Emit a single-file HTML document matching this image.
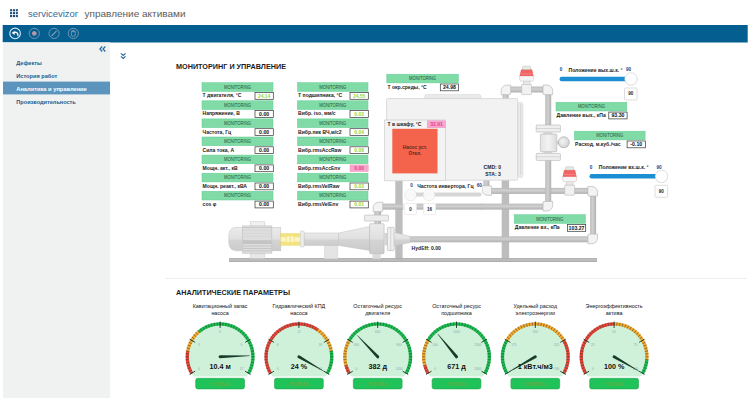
<!DOCTYPE html>
<html lang="ru"><head><meta charset="utf-8"><title>servicevizor</title>
<style>
html,body{margin:0;padding:0;background:#fff;}
body{width:750px;height:405px;overflow:hidden;font-family:'Liberation Sans',sans-serif;}
svg{display:block;}
text{font-family:'Liberation Sans',sans-serif;}
.lbl{font-size:5.05px;font-weight:bold;fill:#222;}
.mon{font-size:4.5px;fill:#1f5236;text-anchor:middle;}
.val{font-size:5.2px;font-weight:bold;text-anchor:middle;fill:#111;}
.valg{font-size:5px;font-weight:bold;text-anchor:middle;fill:#93d843;}
.valp{font-size:5px;font-weight:bold;text-anchor:middle;fill:#e2457e;}
.menu{font-size:6.1px;font-weight:bold;fill:#1d5b8c;}
.gt{font-size:5.4px;fill:#111;text-anchor:middle;}
.gv{font-size:7.2px;font-weight:bold;fill:#111;text-anchor:middle;}
.gl{font-size:3.2px;fill:#8aa;text-anchor:middle;}
.nm{font-size:5.3px;fill:#7fa535;text-anchor:middle;}
.sl{font-size:5.05px;font-weight:bold;fill:#222;}
.sn{font-size:4.6px;font-weight:bold;fill:#173f8a;text-anchor:middle;}
.sb{font-size:4.5px;font-weight:bold;fill:#222;text-anchor:middle;}
</style></head><body>
<svg width="750" height="405" viewBox="0 0 750 405">
<defs>
<linearGradient id="pv" x1="0" y1="0" x2="0" y2="1"><stop offset="0" stop-color="#bcbcbc"/><stop offset="0.45" stop-color="#d0d0d0"/><stop offset="1" stop-color="#b0b0b0"/></linearGradient>
<linearGradient id="ph" x1="0" y1="0" x2="1" y2="0"><stop offset="0" stop-color="#bcbcbc"/><stop offset="0.45" stop-color="#d0d0d0"/><stop offset="1" stop-color="#b0b0b0"/></linearGradient>
<linearGradient id="body" x1="0" y1="0" x2="0" y2="1"><stop offset="0" stop-color="#ebebeb"/><stop offset="0.5" stop-color="#e0e0e0"/><stop offset="0.55" stop-color="#d4d4d4"/><stop offset="1" stop-color="#cbcbcb"/></linearGradient>
<linearGradient id="bodyh" x1="0" y1="0" x2="1" y2="0"><stop offset="0" stop-color="#e4e4e4"/><stop offset="0.5" stop-color="#f2f2f2"/><stop offset="1" stop-color="#dcdcdc"/></linearGradient>
<radialGradient id="ball" cx="0.4" cy="0.4" r="0.7"><stop offset="0" stop-color="#f4f4f4"/><stop offset="1" stop-color="#cfcfcf"/></radialGradient>
</defs>

<rect x="0" y="0" width="750" height="405" fill="#fff"/>
<rect x="10.0" y="9.2" width="2.1" height="2.1" fill="#1f4e79"/>
<rect x="12.9" y="9.2" width="2.1" height="2.1" fill="#1f4e79"/>
<rect x="15.8" y="9.2" width="2.1" height="2.1" fill="#1f4e79"/>
<rect x="10.0" y="12.1" width="2.1" height="2.1" fill="#1f4e79"/>
<rect x="12.9" y="12.1" width="2.1" height="2.1" fill="#1f4e79"/>
<rect x="15.8" y="12.1" width="2.1" height="2.1" fill="#1f4e79"/>
<rect x="10.0" y="15.0" width="2.1" height="2.1" fill="#1f4e79"/>
<rect x="12.9" y="15.0" width="2.1" height="2.1" fill="#1f4e79"/>
<rect x="15.8" y="15.0" width="2.1" height="2.1" fill="#1f4e79"/>
<text x="28" y="17" font-size="9.4" fill="#356a94" textLength="50" lengthAdjust="spacingAndGlyphs">servicevizor</text>
<text x="84.5" y="17" font-size="9.8" fill="#5c5c5c" textLength="101" lengthAdjust="spacingAndGlyphs">управление активами</text>
<rect x="2.7" y="25" width="745" height="17.5" fill="#045f90"/>
<g fill="none" stroke="#fff" stroke-width="0.9">
<circle cx="15.1" cy="33.4" r="5.3" stroke-width="1.1" stroke="#d8ebf7"/>
<path d="M13 32.8 C14.6 31.8 17 32 17.7 33.8 C18 34.6 17.9 35.2 17.6 35.8" stroke-width="1.4"/>
<path d="M11.7 33 L14.6 30.9 L14.6 35 Z" fill="#fff" stroke="none"/>
</g>
<g fill="none" stroke="#7f9bb3" stroke-width="0.9">
<circle cx="34.3" cy="33.4" r="5.1"/><circle cx="34.3" cy="33.4" r="1.9" fill="#b89aa4" stroke="#b89aa4"/>
<circle cx="54.1" cy="33.4" r="5.1"/><path d="M51.6 36 L56.6 30.9" stroke-width="1.3"/>
<circle cx="73.3" cy="33.4" r="5.1"/><rect x="71.4" y="31.7" width="3.8" height="4.4" rx="0.5"/><path d="M70.8 31.2 H75.8 M72.4 30.4 H74.2"/>
</g>
<rect x="3" y="42.3" width="107" height="355.7" fill="#f0f1f1"/>
<path d="M102.2 46.5 L99.9 49 L102.2 51.5 M105.3 46.5 L103 49 L105.3 51.5" fill="none" stroke="#2a6aa0" stroke-width="1.2"/>
<path d="M120.9 53.4 L123.2 55.4 L125.5 53.4 M120.9 56.4 L123.2 58.4 L125.5 56.4" fill="none" stroke="#2a6aa0" stroke-width="1.2"/>
<text x="16.3" y="64.9" class="menu" textLength="25.5" lengthAdjust="spacingAndGlyphs">Дефекты</text>
<text x="16.3" y="77.8" class="menu" textLength="41" lengthAdjust="spacingAndGlyphs">История работ</text>
<rect x="3" y="81.6" width="107" height="12.8" fill="#5b94bd"/>
<text x="16.3" y="90.8" class="menu" style="fill:#fff" textLength="70.5" lengthAdjust="spacingAndGlyphs">Аналитика и управление</text>
<text x="16.3" y="103.9" class="menu" textLength="59.5" lengthAdjust="spacingAndGlyphs">Производительность</text>
<text x="176" y="69" font-size="7.5" font-weight="bold" fill="#1c1c1c" textLength="110" lengthAdjust="spacingAndGlyphs">МОНИТОРИНГ И УПРАВЛЕНИЕ</text>
<rect x="165" y="278" width="582" height="0.8" fill="#ececec"/>
<text x="176" y="295.4" font-size="7.5" font-weight="bold" fill="#1c1c1c" textLength="114" lengthAdjust="spacingAndGlyphs">АНАЛИТИЧЕСКИЕ ПАРАМЕТРЫ</text>
<rect x="395.3" y="180" width="7.3" height="79" fill="#bdbdbd"/>
<rect x="501.7" y="180" width="7.4" height="79" fill="#bdbdbd"/>
<rect x="229" y="258.3" width="368" height="3.6" fill="#bcbcbc"/><rect x="229" y="258.3" width="368" height="0.6" fill="#a2a2a2"/><rect x="229" y="261.3" width="368" height="0.6" fill="#a2a2a2"/>
<rect x="483.4" y="180" width="6" height="6.400000000000006" fill="url(#ph)"/>
<rect x="490.9" y="187.9" width="97.70000000000005" height="6" fill="url(#pv)"/>
<rect x="590.1" y="195.4" width="6" height="39.400000000000006" fill="url(#ph)"/>
<rect x="409" y="236.3" width="179.60000000000002" height="6" fill="url(#pv)"/>
<path d="M482.00 185.70 L482.00 189.80 A5.5 5.5 0 0 0 487.50 195.30 L491.60 195.30 L491.60 186.50 L490.80 186.50 L490.80 185.70 Z" fill="#f3f3f3" stroke="#b0b0b0" stroke-width="0.6" stroke-linejoin="round"/>
<path d="M597.50 196.10 L597.50 192.00 A5.5 5.5 0 0 0 592.00 186.50 L587.90 186.50 L587.90 195.30 L588.70 195.30 L588.70 196.10 Z" fill="#f3f3f3" stroke="#b0b0b0" stroke-width="0.6" stroke-linejoin="round"/>
<path d="M597.50 234.10 L597.50 238.20 A5.5 5.5 0 0 1 592.00 243.70 L587.90 243.70 L587.90 234.90 L588.70 234.90 L588.70 234.10 Z" fill="#f3f3f3" stroke="#b0b0b0" stroke-width="0.6" stroke-linejoin="round"/>
<rect x="374.6" y="211.1" width="6" height="4.900000000000006" fill="url(#ph)"/>
<rect x="382.1" y="203.6" width="161.60000000000002" height="6" fill="url(#pv)"/>
<rect x="545.2" y="94.0" width="6" height="108.1" fill="url(#ph)"/>
<rect x="510.0" y="86.5" width="33.700000000000045" height="6" fill="url(#pv)"/>
<rect x="502.5" y="94.0" width="6" height="5.0" fill="url(#ph)"/>
<path d="M373.20 211.80 L373.20 207.70 A5.5 5.5 0 0 1 378.70 202.20 L382.80 202.20 L382.80 211.00 L382.00 211.00 L382.00 211.80 Z" fill="#f3f3f3" stroke="#b0b0b0" stroke-width="0.6" stroke-linejoin="round"/>
<path d="M552.60 201.40 L552.60 205.50 A5.5 5.5 0 0 1 547.10 211.00 L543.00 211.00 L543.00 202.20 L543.80 202.20 L543.80 201.40 Z" fill="#f3f3f3" stroke="#b0b0b0" stroke-width="0.6" stroke-linejoin="round"/>
<path d="M552.60 94.70 L552.60 90.60 A5.5 5.5 0 0 0 547.10 85.10 L543.00 85.10 L543.00 93.90 L543.80 93.90 L543.80 94.70 Z" fill="#f3f3f3" stroke="#b0b0b0" stroke-width="0.6" stroke-linejoin="round"/>
<path d="M501.10 94.70 L501.10 90.60 A5.5 5.5 0 0 1 506.60 85.10 L510.70 85.10 L510.70 93.90 L509.90 93.90 L509.90 94.70 Z" fill="#f3f3f3" stroke="#b0b0b0" stroke-width="0.6" stroke-linejoin="round"/>
<rect x="521.7" y="84.4" width="9.8" height="10.2" rx="0.8" fill="#f1f1f1" stroke="#b8b8b8" stroke-width="0.6"/>
<rect x="523.2" y="80.9" width="6.8" height="3.5" fill="#e9e9e9" stroke="#c0c0c0" stroke-width="0.5"/>
<path d="M519.6 76.0 H533.6 V79.5 Q533.6 81.1 532.0 81.1 H521.2 Q519.6 81.1 519.6 79.5 Z" fill="#f6f6f6" stroke="#cdbcbc" stroke-width="0.5"/>
<path d="M519.6 76.1 L520.8000000000001 70.5 Q521.0 69.2 522.4 69.2 H530.8000000000001 Q532.2 69.2 532.4 70.5 L533.6 76.1 Z" fill="#f06464"/>
<rect x="520.4" y="73.3" width="12.4" height="1.2" fill="#f58a8a" opacity="0.7"/>
<rect x="522.6" y="66.2" width="8" height="3.2" rx="0.8" fill="#e6ebe6" stroke="#b8b8b8" stroke-width="0.5"/>
<rect x="564.7" y="185.0" width="9.8" height="10.2" rx="0.8" fill="#f1f1f1" stroke="#b8b8b8" stroke-width="0.6"/>
<rect x="566.2" y="181.5" width="6.8" height="3.5" fill="#e9e9e9" stroke="#c0c0c0" stroke-width="0.5"/>
<path d="M562.6 176.6 H576.6 V180.1 Q576.6 181.7 575.0 181.7 H564.2 Q562.6 181.7 562.6 180.1 Z" fill="#f6f6f6" stroke="#cdbcbc" stroke-width="0.5"/>
<path d="M562.6 176.7 L563.8000000000001 171.1 Q564.0 169.79999999999998 565.4 169.79999999999998 H573.8000000000001 Q575.2 169.79999999999998 575.4 171.1 L576.6 176.7 Z" fill="#f06464"/>
<rect x="563.4" y="173.9" width="12.4" height="1.2" fill="#f58a8a" opacity="0.7"/>
<rect x="565.6" y="166.79999999999998" width="8" height="3.2" rx="0.8" fill="#e6ebe6" stroke="#b8b8b8" stroke-width="0.5"/>
<rect x="536.2" y="125" width="24.2" height="7" rx="0.8" fill="#efefef" stroke="#b4b4b4" stroke-width="0.6"/>
<rect x="536.2" y="128.2" width="24.2" height="0.6" fill="#c4c4c4"/>
<rect x="536.2" y="153.4" width="24.2" height="7" rx="0.8" fill="#efefef" stroke="#b4b4b4" stroke-width="0.6"/>
<rect x="536.2" y="156.6" width="24.2" height="0.6" fill="#c4c4c4"/>
<rect x="543.4" y="132" width="9" height="2.6" fill="#d6d6d6"/>
<rect x="543.4" y="151.8" width="9" height="1.8" fill="#d6d6d6"/>
<rect x="540.4" y="134.1" width="16.4" height="17.6" rx="0.8" fill="url(#bodyh)" stroke="#b4b4b4" stroke-width="0.6"/>
<rect x="556.6" y="141" width="2.4" height="3.4" fill="#d0d0d0"/>
<circle cx="563.8" cy="142.3" r="5.5" fill="url(#ball)" stroke="#a8a8a8" stroke-width="0.7"/>
<path d="M424.5 98.8 V96.4 Q424.5 94.4 427 94.4 H478.5 Q481 94.4 481 96.4 V98.8 Z" fill="#e9e9e9" stroke="#d2d2d2" stroke-width="0.5"/>
<rect x="386.6" y="98.6" width="131" height="81.6" rx="1" fill="#f2f2f2" stroke="#d0d0d0" stroke-width="0.7"/>
<rect x="518.2" y="102.3" width="4.6" height="75.3" rx="2" fill="#ececec" stroke="#cdcdcd" stroke-width="0.5"/>
<rect x="520.2" y="104" width="1" height="71" fill="#d5d5d5"/>
<rect x="384.4" y="120" width="61" height="60.8" fill="#f3f3f3" stroke="#cfcfcf" stroke-width="0.7"/>
<rect x="392.3" y="128.8" width="45.2" height="44.6" fill="#f4634c"/>
<text x="414.9" y="149.4" font-size="4.8" fill="#5a2a20" text-anchor="middle" font-weight="bold">Насос уст.</text>
<text x="414.9" y="155.4" font-size="4.8" fill="#5a2a20" text-anchor="middle" font-weight="bold">Откл.</text>
<text x="387.6" y="126" class="lbl">Т в шкафу, °C</text>
<rect x="427.3" y="120.8" width="17.9" height="7" fill="#f9a6d2" stroke="#e58fbf" stroke-width="0.4"/>
<text x="436.5" y="126" class="valp">32.91</text>
<text x="483.6" y="169" class="lbl">CMD: 0</text>
<text x="485.2" y="176.2" class="lbl">STA: 3</text>
<rect x="250.3" y="221.8" width="14.5" height="4.4" fill="#f0f0f0" stroke="#c6c6c6" stroke-width="0.5"/>
<rect x="250.3" y="253.3" width="14.4" height="5" fill="#e8e8e8" stroke="#cccccc" stroke-width="0.5"/>
<path d="M242.5 227.3 H237 Q228.8 227.3 228.8 236 V242 Q228.8 250.8 237 250.8 H242.5 Z" fill="url(#body)" stroke="#c2c2c2" stroke-width="0.5"/>
<rect x="242.3" y="225.9" width="29.6" height="27.4" fill="#dddddd" stroke="#bdbdbd" stroke-width="0.5"/>
<rect x="242.6" y="227.2" width="29" height="0.8" fill="#c6c6c6"/>
<rect x="242.6" y="230.5" width="29" height="0.5" fill="#d0d0d0"/>
<rect x="242.6" y="233.5" width="29" height="0.5" fill="#d0d0d0"/>
<rect x="242.6" y="236.5" width="29" height="0.5" fill="#d0d0d0"/>
<rect x="242.6" y="240.2" width="29" height="3.8" fill="#c4c4c4"/>
<rect x="242.6" y="245.6" width="29" height="1" fill="#c6c6c6"/>
<rect x="242.6" y="248" width="29" height="1" fill="#c6c6c6"/>
<rect x="242.6" y="250.4" width="29" height="1" fill="#c6c6c6"/>
<rect x="271.9" y="227.3" width="8.9" height="23.5" fill="url(#body)" stroke="#c2c2c2" stroke-width="0.5"/>
<rect x="280.8" y="233.5" width="19.8" height="11.7" fill="#f3e37c" stroke="#e3d263" stroke-width="0.4"/>
<rect x="280.8" y="237.2" width="19.8" height="4.3" fill="#fbf6c8"/>
<rect x="286.5" y="235.7" width="3.7" height="7.1" rx="1" fill="#fbf6c8" stroke="#e3d263" stroke-width="0.4"/>
<rect x="290.4" y="235.7" width="3.7" height="7.1" rx="1" fill="#fbf6c8" stroke="#e3d263" stroke-width="0.4"/>
<rect x="324.3" y="245" width="13.6" height="13.8" fill="#e4e4e4" stroke="#d0d0d0" stroke-width="0.4"/>
<rect x="300.4" y="231" width="3.8" height="16" rx="0.8" fill="#ececec" stroke="#c8c8c8" stroke-width="0.5"/>
<rect x="304.2" y="233" width="34.5" height="12.4" fill="url(#body)" stroke="#c0c0c0" stroke-width="0.5"/>
<path d="M338.5 233 L369.8 226.5 V250.5 L338.5 245.4 Z" fill="url(#body)" stroke="#c0c0c0" stroke-width="0.5"/>
<rect x="372.4" y="253.5" width="8.4" height="5.3" fill="#dcdcdc"/>
<rect x="374.4" y="211.5" width="6.6" height="12.6" fill="url(#ph)"/>
<rect x="364.3" y="215.1" width="24.2" height="6" rx="0.8" fill="#ededed" stroke="#b8b8b8" stroke-width="0.6"/>
<rect x="369.6" y="223.7" width="14.5" height="30" rx="1" fill="url(#body)" stroke="#b8b8b8" stroke-width="0.6"/>
<rect x="384" y="233" width="3.6" height="12.4" fill="#d6d6d6"/>
<rect x="387.4" y="227.4" width="6.8" height="23.2" rx="0.8" fill="#efefef" stroke="#b4b4b4" stroke-width="0.6"/>
<rect x="390.5" y="227.4" width="0.6" height="23.2" fill="#c4c4c4"/>
<path d="M394.2 232.4 L410.2 236.3 V242.5 L394.2 245.8 Z" fill="url(#body)" stroke="#c0c0c0" stroke-width="0.5"/>
<text x="411.6" y="249.6" class="lbl">HydEff:  0.00</text>
<rect x="202" y="82.7" width="71" height="8.7" fill="#80dba6" stroke="#5fcc93" stroke-width="0.5"/>
<text x="237.5" y="88.60000000000001" class="mon" textLength="27" lengthAdjust="spacingAndGlyphs">MONITORING</text>
<text x="202.6" y="97.3" class="lbl">Т двигателя, °C</text>
<rect x="255.0" y="92.5" width="18.3" height="6.8" fill="#fff" stroke="#333" stroke-width="0.7"/>
<text x="264.15" y="97.8" class="valg">24.14</text>
<rect x="202" y="100.80000000000001" width="71" height="8.7" fill="#80dba6" stroke="#5fcc93" stroke-width="0.5"/>
<text x="237.5" y="106.70000000000002" class="mon" textLength="27" lengthAdjust="spacingAndGlyphs">MONITORING</text>
<text x="202.6" y="115.4" class="lbl">Напряжение, В</text>
<rect x="255.0" y="110.60000000000001" width="18.3" height="6.8" fill="#fff" stroke="#333" stroke-width="0.7"/>
<text x="264.15" y="115.9" class="val">0.00</text>
<rect x="202" y="118.9" width="71" height="8.7" fill="#80dba6" stroke="#5fcc93" stroke-width="0.5"/>
<text x="237.5" y="124.80000000000001" class="mon" textLength="27" lengthAdjust="spacingAndGlyphs">MONITORING</text>
<text x="202.6" y="133.5" class="lbl">Частота, Гц</text>
<rect x="255.0" y="128.70000000000002" width="18.3" height="6.8" fill="#fff" stroke="#333" stroke-width="0.7"/>
<text x="264.15" y="134.00000000000003" class="val">0.00</text>
<rect x="202" y="137.0" width="71" height="8.7" fill="#80dba6" stroke="#5fcc93" stroke-width="0.5"/>
<text x="237.5" y="142.9" class="mon" textLength="27" lengthAdjust="spacingAndGlyphs">MONITORING</text>
<text x="202.6" y="151.6" class="lbl">Сила тока, А</text>
<rect x="255.0" y="146.8" width="18.3" height="6.8" fill="#fff" stroke="#333" stroke-width="0.7"/>
<text x="264.15" y="152.10000000000002" class="val">0.00</text>
<rect x="202" y="155.10000000000002" width="71" height="8.7" fill="#80dba6" stroke="#5fcc93" stroke-width="0.5"/>
<text x="237.5" y="161.00000000000003" class="mon" textLength="27" lengthAdjust="spacingAndGlyphs">MONITORING</text>
<text x="202.6" y="169.70000000000002" class="lbl">Мощн. акт., кВ</text>
<rect x="255.0" y="164.90000000000003" width="18.3" height="6.8" fill="#fff" stroke="#333" stroke-width="0.7"/>
<text x="264.15" y="170.20000000000005" class="val">0.00</text>
<rect x="202" y="173.2" width="71" height="8.7" fill="#80dba6" stroke="#5fcc93" stroke-width="0.5"/>
<text x="237.5" y="179.1" class="mon" textLength="27" lengthAdjust="spacingAndGlyphs">MONITORING</text>
<text x="202.6" y="187.79999999999998" class="lbl">Мощн. реакт., кВА</text>
<rect x="255.0" y="183.0" width="18.3" height="6.8" fill="#fff" stroke="#333" stroke-width="0.7"/>
<text x="264.15" y="188.3" class="val">0.00</text>
<rect x="202" y="191.3" width="71" height="8.7" fill="#80dba6" stroke="#5fcc93" stroke-width="0.5"/>
<text x="237.5" y="197.20000000000002" class="mon" textLength="27" lengthAdjust="spacingAndGlyphs">MONITORING</text>
<text x="202.6" y="205.9" class="lbl">cos φ</text>
<rect x="255.0" y="201.10000000000002" width="18.3" height="6.8" fill="#fff" stroke="#333" stroke-width="0.7"/>
<text x="264.15" y="206.40000000000003" class="val">0.00</text>
<rect x="297.5" y="82.7" width="70.5" height="8.7" fill="#80dba6" stroke="#5fcc93" stroke-width="0.5"/>
<text x="332.75" y="88.60000000000001" class="mon" textLength="27" lengthAdjust="spacingAndGlyphs">MONITORING</text>
<text x="298.1" y="97.3" class="lbl">Т подшипника, °C</text>
<rect x="350.0" y="92.5" width="18.3" height="6.8" fill="#fff" stroke="#333" stroke-width="0.7"/>
<text x="359.15" y="97.8" class="valg">24.55</text>
<rect x="297.5" y="100.80000000000001" width="70.5" height="8.7" fill="#80dba6" stroke="#5fcc93" stroke-width="0.5"/>
<text x="332.75" y="106.70000000000002" class="mon" textLength="27" lengthAdjust="spacingAndGlyphs">MONITORING</text>
<text x="298.1" y="115.4" class="lbl">Вибр. iso, мм/с</text>
<rect x="350.0" y="110.60000000000001" width="18.3" height="6.8" fill="#fff" stroke="#333" stroke-width="0.7"/>
<text x="359.15" y="115.9" class="valg">0.03</text>
<rect x="297.5" y="118.9" width="70.5" height="8.7" fill="#80dba6" stroke="#5fcc93" stroke-width="0.5"/>
<text x="332.75" y="124.80000000000001" class="mon" textLength="27" lengthAdjust="spacingAndGlyphs">MONITORING</text>
<text x="298.1" y="133.5" class="lbl">Вибр.пик ВЧ,м/с2</text>
<rect x="350.0" y="128.70000000000002" width="18.3" height="6.8" fill="#fff" stroke="#333" stroke-width="0.7"/>
<text x="359.15" y="134.00000000000003" class="valg">0.04</text>
<rect x="297.5" y="137.0" width="70.5" height="8.7" fill="#80dba6" stroke="#5fcc93" stroke-width="0.5"/>
<text x="332.75" y="142.9" class="mon" textLength="27" lengthAdjust="spacingAndGlyphs">MONITORING</text>
<text x="298.1" y="151.6" class="lbl">Вибр.rmsAccRaw</text>
<rect x="350.0" y="146.8" width="18.3" height="6.8" fill="#fff" stroke="#333" stroke-width="0.7"/>
<text x="359.15" y="152.10000000000002" class="valg">0.08</text>
<rect x="297.5" y="155.10000000000002" width="70.5" height="8.7" fill="#80dba6" stroke="#5fcc93" stroke-width="0.5"/>
<text x="332.75" y="161.00000000000003" class="mon" textLength="27" lengthAdjust="spacingAndGlyphs">MONITORING</text>
<text x="298.1" y="169.70000000000002" class="lbl">Вибр.rmsAccEnv</text>
<rect x="350.0" y="164.90000000000003" width="18.3" height="6.8" fill="#f7a8d0" stroke="#e9a" stroke-width="0.4"/>
<text x="359.15" y="170.10000000000002" class="valp">0.00</text>
<rect x="297.5" y="173.2" width="70.5" height="8.7" fill="#80dba6" stroke="#5fcc93" stroke-width="0.5"/>
<text x="332.75" y="179.1" class="mon" textLength="27" lengthAdjust="spacingAndGlyphs">MONITORING</text>
<text x="298.1" y="187.79999999999998" class="lbl">Вибр.rmsVelRaw</text>
<rect x="350.0" y="183.0" width="18.3" height="6.8" fill="#fff" stroke="#333" stroke-width="0.7"/>
<text x="359.15" y="188.3" class="valg">0.03</text>
<rect x="297.5" y="191.3" width="70.5" height="8.7" fill="#80dba6" stroke="#5fcc93" stroke-width="0.5"/>
<text x="332.75" y="197.20000000000002" class="mon" textLength="27" lengthAdjust="spacingAndGlyphs">MONITORING</text>
<text x="298.1" y="205.9" class="lbl">Вибр.rmsVelEnv</text>
<rect x="350.0" y="201.10000000000002" width="18.3" height="6.8" fill="#fff" stroke="#333" stroke-width="0.7"/>
<text x="359.15" y="206.40000000000003" class="valg">0.01</text>
<rect x="386.8" y="74.2" width="71.5" height="8.7" fill="#80dba6" stroke="#5fcc93" stroke-width="0.5"/>
<text x="422.55" y="80.10000000000001" class="mon" textLength="27" lengthAdjust="spacingAndGlyphs">MONITORING</text>
<text x="387.40000000000003" y="88.8" class="lbl">Т окр.среды, °C</text>
<rect x="440.3" y="84.0" width="18.3" height="6.8" fill="#fff" stroke="#333" stroke-width="0.7"/>
<text x="449.45" y="89.3" class="val">24.98</text>
<rect x="556" y="102.3" width="70.8" height="8.7" fill="#80dba6" stroke="#5fcc93" stroke-width="0.5"/>
<text x="591.4" y="108.2" class="mon" textLength="27" lengthAdjust="spacingAndGlyphs">MONITORING</text>
<text x="556.6" y="116.89999999999999" class="lbl">Давление вых., кПа</text>
<rect x="608.8" y="112.1" width="18.3" height="6.8" fill="#fff" stroke="#333" stroke-width="0.7"/>
<text x="617.9499999999999" y="117.39999999999999" class="val">93.30</text>
<rect x="574.5" y="131.2" width="70.6" height="8.7" fill="#80dba6" stroke="#5fcc93" stroke-width="0.5"/>
<text x="609.8" y="137.1" class="mon" textLength="27" lengthAdjust="spacingAndGlyphs">MONITORING</text>
<text x="575.1" y="145.79999999999998" class="lbl">Расход, м.куб./час</text>
<rect x="627.1" y="141.0" width="18.3" height="6.8" fill="#fff" stroke="#333" stroke-width="0.7"/>
<text x="636.25" y="146.3" class="val">-0.10</text>
<rect x="514.2" y="214.7" width="71.2" height="8.7" fill="#80dba6" stroke="#5fcc93" stroke-width="0.5"/>
<text x="549.8000000000001" y="220.6" class="mon" textLength="27" lengthAdjust="spacingAndGlyphs">MONITORING</text>
<text x="514.8000000000001" y="229.29999999999998" class="lbl">Давление вх., кПа</text>
<rect x="567.4000000000001" y="224.5" width="18.3" height="6.8" fill="#fff" stroke="#333" stroke-width="0.7"/>
<text x="576.5500000000001" y="229.8" class="val">103.27</text>
<text x="561.0" y="71.4" class="sn">0</text>
<text x="568.5" y="71.8" class="sl">Положение вых.ш.к. °</text>
<text x="628.5" y="71.4" class="sn">90</text>
<rect x="559.5" y="76.8" width="71.0" height="4.4" rx="2.2" fill="#1b8fd2"/>
<circle cx="631.0" cy="79.4" r="6.6" fill="#000" opacity="0.08"/>
<circle cx="631.0" cy="79" r="6.2" fill="#fff" stroke="#d6d6d6" stroke-width="0.7"/>
<rect x="624.5" y="88" width="12.6" height="12" rx="1" fill="#fff" stroke="#cfcfcf" stroke-width="0.7"/>
<text x="630.8" y="95.4" class="sb">90</text>
<text x="591.0" y="168.70000000000002" class="sn">0</text>
<text x="598.8" y="169.10000000000002" class="sl">Положение вх.ш.к. °</text>
<text x="659" y="168.70000000000002" class="sn">90</text>
<rect x="589.5" y="174.10000000000002" width="71.5" height="4.4" rx="2.2" fill="#1b8fd2"/>
<circle cx="661.5" cy="176.70000000000002" r="6.6" fill="#000" opacity="0.08"/>
<circle cx="661.5" cy="176.3" r="6.2" fill="#fff" stroke="#d6d6d6" stroke-width="0.7"/>
<rect x="655" y="185.3" width="12.6" height="12" rx="1" fill="#fff" stroke="#cfcfcf" stroke-width="0.7"/>
<text x="661.3" y="192.70000000000002" class="sb">90</text>
<rect x="403.2" y="181.5" width="78.6" height="33.5" fill="#fff" opacity="0.92"/>
<text x="411.6" y="186.6" class="sn">0</text>
<text x="417.2" y="187.8" class="sl">Частота инвертора, Гц</text>
<text x="479.3" y="186.6" class="sn">60</text>
<rect x="405" y="192.5" width="76.6" height="4" rx="2" fill="#d6d6d6"/>
<rect x="435.6" y="203.6" width="47.39999999999998" height="6" fill="url(#pv)"/>
<rect x="416.4" y="203.6" width="7.2000000000000455" height="6" fill="url(#pv)"/>
<circle cx="410.5" cy="195.2" r="6.2" fill="#000" opacity="0.06"/>
<circle cx="410.5" cy="194.8" r="5.8" fill="#fbfbfb" stroke="#e6e6e6" stroke-width="0.5" opacity="0.95"/>
<circle cx="429" cy="195.2" r="6.2" fill="#000" opacity="0.06"/>
<circle cx="429" cy="194.8" r="5.8" fill="#fbfbfb" stroke="#e6e6e6" stroke-width="0.5" opacity="0.95"/>
<rect x="404.6" y="203.6" width="11.8" height="11" rx="0.8" fill="#fff" stroke="#e0e0e0" stroke-width="0.6"/>
<text x="410.5" y="210.6" class="sb">0</text>
<rect x="423.7" y="203.6" width="11.8" height="11" rx="0.8" fill="#fff" stroke="#e0e0e0" stroke-width="0.6"/>
<text x="429.59999999999997" y="210.6" class="sb">16</text>
<text x="220.1" y="308.2" class="gt">Кавитационный запас</text>
<text x="220.1" y="314.9" class="gt">насоса</text>
<clipPath id="gc0"><rect x="180.1" y="316.8" width="80" height="59.80000000000001"/></clipPath>
<circle cx="220.1" cy="356.8" r="33" fill="#cff1da" clip-path="url(#gc0)"/>
<path d="M190.27 374.13 L188.79 371.30 L191.79 369.91 L193.12 372.47 Z" fill="#ea4433"/>
<path d="M188.87 371.46 L187.65 368.51 L190.75 367.39 L191.86 370.06 Z" fill="#ea4433"/>
<path d="M187.71 368.68 L186.75 365.64 L189.94 364.80 L190.81 367.55 Z" fill="#ea4433"/>
<path d="M186.80 365.82 L186.11 362.70 L189.36 362.14 L189.98 364.95 Z" fill="#ea4433"/>
<path d="M186.14 362.88 L185.72 359.72 L189.01 359.44 L189.39 362.30 Z" fill="#ea4433"/>
<path d="M185.74 359.90 L185.60 356.71 L188.90 356.72 L189.03 359.60 Z" fill="#ea4433"/>
<path d="M185.60 356.89 L185.74 353.70 L189.03 354.00 L188.90 356.88 Z" fill="#ea4433"/>
<path d="M185.72 353.88 L186.14 350.72 L189.39 351.30 L189.01 354.16 Z" fill="#ea4433"/>
<path d="M186.11 350.90 L186.80 347.78 L189.98 348.65 L189.36 351.46 Z" fill="#f5a927"/>
<path d="M186.75 347.96 L187.71 344.92 L190.81 346.05 L189.94 348.80 Z" fill="#f5a927"/>
<path d="M187.65 345.09 L188.87 342.14 L191.86 343.54 L190.75 346.21 Z" fill="#f5a927"/>
<path d="M188.79 342.30 L190.27 339.47 L193.12 341.13 L191.79 343.69 Z" fill="#f5a927"/>
<path d="M190.18 339.63 L191.89 336.94 L194.59 338.84 L193.04 341.27 Z" fill="#f5a927"/>
<path d="M191.79 337.09 L193.73 334.55 L196.25 336.68 L194.50 338.97 Z" fill="#f5a927"/>
<path d="M193.61 334.69 L195.77 332.34 L198.10 334.68 L196.15 336.81 Z" fill="#f5a927"/>
<path d="M195.64 332.47 L197.99 330.31 L200.11 332.85 L197.98 334.80 Z" fill="#f5a927"/>
<path d="M197.85 330.43 L200.39 328.49 L202.27 331.20 L199.98 332.95 Z" fill="#19c04c"/>
<path d="M200.24 328.59 L202.93 326.88 L204.57 329.74 L202.14 331.29 Z" fill="#19c04c"/>
<path d="M202.77 326.97 L205.60 325.49 L206.99 328.49 L204.43 329.82 Z" fill="#19c04c"/>
<path d="M205.44 325.57 L208.39 324.35 L209.51 327.45 L206.84 328.56 Z" fill="#19c04c"/>
<path d="M208.22 324.41 L211.26 323.45 L212.10 326.64 L209.35 327.51 Z" fill="#19c04c"/>
<path d="M211.08 323.50 L214.20 322.81 L214.76 326.06 L211.95 326.68 Z" fill="#19c04c"/>
<path d="M214.02 322.84 L217.18 322.42 L217.46 325.71 L214.60 326.09 Z" fill="#19c04c"/>
<path d="M217.00 322.44 L220.19 322.30 L220.18 325.60 L217.30 325.73 Z" fill="#19c04c"/>
<path d="M220.01 322.30 L223.20 322.44 L222.90 325.73 L220.02 325.60 Z" fill="#19c04c"/>
<path d="M223.02 322.42 L226.18 322.84 L225.60 326.09 L222.74 325.71 Z" fill="#19c04c"/>
<path d="M226.00 322.81 L229.12 323.50 L228.25 326.68 L225.44 326.06 Z" fill="#19c04c"/>
<path d="M228.94 323.45 L231.98 324.41 L230.85 327.51 L228.10 326.64 Z" fill="#19c04c"/>
<path d="M231.81 324.35 L234.76 325.57 L233.36 328.56 L230.69 327.45 Z" fill="#19c04c"/>
<path d="M234.60 325.49 L237.43 326.97 L235.77 329.82 L233.21 328.49 Z" fill="#19c04c"/>
<path d="M237.27 326.88 L239.96 328.59 L238.06 331.29 L235.63 329.74 Z" fill="#19c04c"/>
<path d="M239.81 328.49 L242.35 330.43 L240.22 332.95 L237.93 331.20 Z" fill="#19c04c"/>
<path d="M242.21 330.31 L244.56 332.47 L242.22 334.80 L240.09 332.85 Z" fill="#19c04c"/>
<path d="M244.43 332.34 L246.59 334.69 L244.05 336.81 L242.10 334.68 Z" fill="#19c04c"/>
<path d="M246.47 334.55 L248.41 337.09 L245.70 338.97 L243.95 336.68 Z" fill="#19c04c"/>
<path d="M248.31 336.94 L250.02 339.63 L247.16 341.27 L245.61 338.84 Z" fill="#19c04c"/>
<path d="M249.93 339.47 L251.41 342.30 L248.41 343.69 L247.08 341.13 Z" fill="#19c04c"/>
<path d="M251.33 342.14 L252.55 345.09 L249.45 346.21 L248.34 343.54 Z" fill="#19c04c"/>
<path d="M252.49 344.92 L253.45 347.96 L250.26 348.80 L249.39 346.05 Z" fill="#19c04c"/>
<path d="M253.40 347.78 L254.09 350.90 L250.84 351.46 L250.22 348.65 Z" fill="#19c04c"/>
<path d="M254.06 350.72 L254.48 353.88 L251.19 354.16 L250.81 351.30 Z" fill="#19c04c"/>
<path d="M254.46 353.70 L254.60 356.89 L251.30 356.88 L251.17 354.00 Z" fill="#19c04c"/>
<path d="M254.60 356.71 L254.46 359.90 L251.17 359.60 L251.30 356.72 Z" fill="#19c04c"/>
<path d="M254.48 359.72 L254.06 362.88 L250.81 362.30 L251.19 359.44 Z" fill="#19c04c"/>
<path d="M254.09 362.70 L253.40 365.82 L250.22 364.95 L250.84 362.14 Z" fill="#19c04c"/>
<path d="M253.45 365.64 L252.49 368.68 L249.39 367.55 L250.26 364.80 Z" fill="#19c04c"/>
<path d="M252.55 368.51 L251.33 371.46 L248.34 370.06 L249.45 367.39 Z" fill="#19c04c"/>
<path d="M251.41 371.30 L249.93 374.13 L247.08 372.47 L248.41 369.91 Z" fill="#19c04c"/>
<path d="M190.22 374.05 L193.08 372.40" stroke="#123" stroke-opacity="0.8" stroke-width="0.6"/>
<path d="M188.83 371.38 L191.82 369.99" stroke="#123" stroke-opacity="0.8" stroke-width="0.6"/>
<path d="M187.68 368.60 L190.78 367.47" stroke="#123" stroke-opacity="0.8" stroke-width="0.6"/>
<path d="M186.78 365.73 L189.96 364.88" stroke="#123" stroke-opacity="0.8" stroke-width="0.6"/>
<path d="M186.12 362.79 L189.37 362.22" stroke="#123" stroke-opacity="0.8" stroke-width="0.6"/>
<path d="M185.73 359.81 L189.02 359.52" stroke="#123" stroke-opacity="0.8" stroke-width="0.6"/>
<path d="M185.60 356.80 L188.90 356.80" stroke="#123" stroke-opacity="0.8" stroke-width="0.6"/>
<path d="M185.73 353.79 L189.02 354.08" stroke="#123" stroke-opacity="0.8" stroke-width="0.6"/>
<path d="M186.12 350.81 L189.37 351.38" stroke="#123" stroke-opacity="0.8" stroke-width="0.6"/>
<path d="M186.78 347.87 L189.96 348.72" stroke="#123" stroke-opacity="0.8" stroke-width="0.6"/>
<path d="M187.68 345.00 L190.78 346.13" stroke="#123" stroke-opacity="0.8" stroke-width="0.6"/>
<path d="M188.83 342.22 L191.82 343.61" stroke="#123" stroke-opacity="0.8" stroke-width="0.6"/>
<path d="M190.22 339.55 L193.08 341.20" stroke="#123" stroke-opacity="0.8" stroke-width="0.6"/>
<path d="M191.84 337.01 L194.54 338.90" stroke="#123" stroke-opacity="0.8" stroke-width="0.6"/>
<path d="M193.67 334.62 L196.20 336.75" stroke="#123" stroke-opacity="0.8" stroke-width="0.6"/>
<path d="M195.70 332.40 L198.04 334.74" stroke="#123" stroke-opacity="0.8" stroke-width="0.6"/>
<path d="M197.92 330.37 L200.05 332.90" stroke="#123" stroke-opacity="0.8" stroke-width="0.6"/>
<path d="M200.31 328.54 L202.20 331.24" stroke="#123" stroke-opacity="0.8" stroke-width="0.6"/>
<path d="M202.85 326.92 L204.50 329.78" stroke="#123" stroke-opacity="0.8" stroke-width="0.6"/>
<path d="M205.52 325.53 L206.91 328.52" stroke="#123" stroke-opacity="0.8" stroke-width="0.6"/>
<path d="M208.30 324.38 L209.43 327.48" stroke="#123" stroke-opacity="0.8" stroke-width="0.6"/>
<path d="M211.17 323.48 L212.02 326.66" stroke="#123" stroke-opacity="0.8" stroke-width="0.6"/>
<path d="M214.11 322.82 L214.68 326.07" stroke="#123" stroke-opacity="0.8" stroke-width="0.6"/>
<path d="M217.09 322.43 L217.38 325.72" stroke="#123" stroke-opacity="0.8" stroke-width="0.6"/>
<path d="M220.10 322.30 L220.10 325.60" stroke="#123" stroke-opacity="0.8" stroke-width="0.6"/>
<path d="M223.11 322.43 L222.82 325.72" stroke="#123" stroke-opacity="0.8" stroke-width="0.6"/>
<path d="M226.09 322.82 L225.52 326.07" stroke="#123" stroke-opacity="0.8" stroke-width="0.6"/>
<path d="M229.03 323.48 L228.18 326.66" stroke="#123" stroke-opacity="0.8" stroke-width="0.6"/>
<path d="M231.90 324.38 L230.77 327.48" stroke="#123" stroke-opacity="0.8" stroke-width="0.6"/>
<path d="M234.68 325.53 L233.29 328.52" stroke="#123" stroke-opacity="0.8" stroke-width="0.6"/>
<path d="M237.35 326.92 L235.70 329.78" stroke="#123" stroke-opacity="0.8" stroke-width="0.6"/>
<path d="M239.89 328.54 L238.00 331.24" stroke="#123" stroke-opacity="0.8" stroke-width="0.6"/>
<path d="M242.28 330.37 L240.15 332.90" stroke="#123" stroke-opacity="0.8" stroke-width="0.6"/>
<path d="M244.50 332.40 L242.16 334.74" stroke="#123" stroke-opacity="0.8" stroke-width="0.6"/>
<path d="M246.53 334.62 L244.00 336.75" stroke="#123" stroke-opacity="0.8" stroke-width="0.6"/>
<path d="M248.36 337.01 L245.66 338.90" stroke="#123" stroke-opacity="0.8" stroke-width="0.6"/>
<path d="M249.98 339.55 L247.12 341.20" stroke="#123" stroke-opacity="0.8" stroke-width="0.6"/>
<path d="M251.37 342.22 L248.38 343.61" stroke="#123" stroke-opacity="0.8" stroke-width="0.6"/>
<path d="M252.52 345.00 L249.42 346.13" stroke="#123" stroke-opacity="0.8" stroke-width="0.6"/>
<path d="M253.42 347.87 L250.24 348.72" stroke="#123" stroke-opacity="0.8" stroke-width="0.6"/>
<path d="M254.08 350.81 L250.83 351.38" stroke="#123" stroke-opacity="0.8" stroke-width="0.6"/>
<path d="M254.47 353.79 L251.18 354.08" stroke="#123" stroke-opacity="0.8" stroke-width="0.6"/>
<path d="M254.60 356.80 L251.30 356.80" stroke="#123" stroke-opacity="0.8" stroke-width="0.6"/>
<path d="M254.47 359.81 L251.18 359.52" stroke="#123" stroke-opacity="0.8" stroke-width="0.6"/>
<path d="M254.08 362.79 L250.83 362.22" stroke="#123" stroke-opacity="0.8" stroke-width="0.6"/>
<path d="M253.42 365.73 L250.24 364.88" stroke="#123" stroke-opacity="0.8" stroke-width="0.6"/>
<path d="M252.52 368.60 L249.42 367.47" stroke="#123" stroke-opacity="0.8" stroke-width="0.6"/>
<path d="M251.37 371.38 L248.38 369.99" stroke="#123" stroke-opacity="0.8" stroke-width="0.6"/>
<path d="M249.98 374.05 L247.12 372.40" stroke="#123" stroke-opacity="0.8" stroke-width="0.6"/>
<path d="M189.62 374.40 L195.16 371.20" stroke="#1c3a2a" stroke-width="0.9"/>
<text x="198.8" y="370.2" class="gl">0</text>
<path d="M189.62 339.20 L195.16 342.40" stroke="#1c3a2a" stroke-width="0.9"/>
<text x="198.8" y="345.6" class="gl">3</text>
<path d="M220.10 321.60 L220.10 328.00" stroke="#1c3a2a" stroke-width="0.9"/>
<text x="220.1" y="333.3" class="gl">6</text>
<path d="M250.58 339.20 L245.04 342.40" stroke="#1c3a2a" stroke-width="0.9"/>
<text x="241.4" y="345.6" class="gl">9</text>
<path d="M250.58 374.40 L245.04 371.20" stroke="#1c3a2a" stroke-width="0.9"/>
<text x="241.4" y="370.2" class="gl">12</text>
<g transform="translate(220.1 356.8) rotate(-2.0)"><path d="M0 -1.5 L29.6 -0.2 L29.6 0.2 L0 1.5 A1.5 1.5 0 0 1 0 -1.5 Z" fill="#173c28"/></g>
<text x="220.1" y="369.4" class="gv">10.4 м</text>
<rect x="195.7" y="378.3" width="48.8" height="10.6" rx="2" fill="#20c25a" stroke="#19a64b" stroke-width="0.6"/>
<text x="220.1" y="385.5" class="nm">НОРМА</text>
<text x="298.9" y="308.2" class="gt">Гидравлический КПД</text>
<text x="298.9" y="314.9" class="gt">насоса</text>
<clipPath id="gc1"><rect x="258.9" y="316.8" width="80" height="59.80000000000001"/></clipPath>
<circle cx="298.9" cy="356.8" r="33" fill="#cff1da" clip-path="url(#gc1)"/>
<path d="M269.07 374.13 L267.59 371.30 L270.59 369.91 L271.92 372.47 Z" fill="#ea4433"/>
<path d="M267.67 371.46 L266.45 368.51 L269.55 367.39 L270.66 370.06 Z" fill="#ea4433"/>
<path d="M266.51 368.68 L265.55 365.64 L268.74 364.80 L269.61 367.55 Z" fill="#ea4433"/>
<path d="M265.60 365.82 L264.91 362.70 L268.16 362.14 L268.78 364.95 Z" fill="#ea4433"/>
<path d="M264.94 362.88 L264.52 359.72 L267.81 359.44 L268.19 362.30 Z" fill="#ea4433"/>
<path d="M264.54 359.90 L264.40 356.71 L267.70 356.72 L267.83 359.60 Z" fill="#ea4433"/>
<path d="M264.40 356.89 L264.54 353.70 L267.83 354.00 L267.70 356.88 Z" fill="#ea4433"/>
<path d="M264.52 353.88 L264.94 350.72 L268.19 351.30 L267.81 354.16 Z" fill="#ea4433"/>
<path d="M264.91 350.90 L265.60 347.78 L268.78 348.65 L268.16 351.46 Z" fill="#ea4433"/>
<path d="M265.55 347.96 L266.51 344.92 L269.61 346.05 L268.74 348.80 Z" fill="#ea4433"/>
<path d="M266.45 345.09 L267.67 342.14 L270.66 343.54 L269.55 346.21 Z" fill="#ea4433"/>
<path d="M267.59 342.30 L269.07 339.47 L271.92 341.13 L270.59 343.69 Z" fill="#ea4433"/>
<path d="M268.98 339.63 L270.69 336.94 L273.39 338.84 L271.84 341.27 Z" fill="#ea4433"/>
<path d="M270.59 337.09 L272.53 334.55 L275.05 336.68 L273.30 338.97 Z" fill="#ea4433"/>
<path d="M272.41 334.69 L274.57 332.34 L276.90 334.68 L274.95 336.81 Z" fill="#ea4433"/>
<path d="M274.44 332.47 L276.79 330.31 L278.91 332.85 L276.78 334.80 Z" fill="#ea4433"/>
<path d="M276.65 330.43 L279.19 328.49 L281.07 331.20 L278.78 332.95 Z" fill="#ea4433"/>
<path d="M279.04 328.59 L281.73 326.88 L283.37 329.74 L280.94 331.29 Z" fill="#ea4433"/>
<path d="M281.57 326.97 L284.40 325.49 L285.79 328.49 L283.23 329.82 Z" fill="#ea4433"/>
<path d="M284.24 325.57 L287.19 324.35 L288.31 327.45 L285.64 328.56 Z" fill="#ea4433"/>
<path d="M287.02 324.41 L290.06 323.45 L290.90 326.64 L288.15 327.51 Z" fill="#ea4433"/>
<path d="M289.88 323.50 L293.00 322.81 L293.56 326.06 L290.75 326.68 Z" fill="#ea4433"/>
<path d="M292.82 322.84 L295.98 322.42 L296.26 325.71 L293.40 326.09 Z" fill="#ea4433"/>
<path d="M295.80 322.44 L298.99 322.30 L298.98 325.60 L296.10 325.73 Z" fill="#ea4433"/>
<path d="M298.81 322.30 L302.00 322.44 L301.70 325.73 L298.82 325.60 Z" fill="#ea4433"/>
<path d="M301.82 322.42 L304.98 322.84 L304.40 326.09 L301.54 325.71 Z" fill="#ea4433"/>
<path d="M304.80 322.81 L307.92 323.50 L307.05 326.68 L304.24 326.06 Z" fill="#ea4433"/>
<path d="M307.74 323.45 L310.78 324.41 L309.65 327.51 L306.90 326.64 Z" fill="#ea4433"/>
<path d="M310.61 324.35 L313.56 325.57 L312.16 328.56 L309.49 327.45 Z" fill="#ea4433"/>
<path d="M313.40 325.49 L316.23 326.97 L314.57 329.82 L312.01 328.49 Z" fill="#ea4433"/>
<path d="M316.07 326.88 L318.76 328.59 L316.86 331.29 L314.43 329.74 Z" fill="#ea4433"/>
<path d="M318.61 328.49 L321.15 330.43 L319.02 332.95 L316.73 331.20 Z" fill="#f5a927"/>
<path d="M321.01 330.31 L323.36 332.47 L321.02 334.80 L318.89 332.85 Z" fill="#f5a927"/>
<path d="M323.23 332.34 L325.39 334.69 L322.85 336.81 L320.90 334.68 Z" fill="#f5a927"/>
<path d="M325.27 334.55 L327.21 337.09 L324.50 338.97 L322.75 336.68 Z" fill="#f5a927"/>
<path d="M327.11 336.94 L328.82 339.63 L325.96 341.27 L324.41 338.84 Z" fill="#f5a927"/>
<path d="M328.73 339.47 L330.21 342.30 L327.21 343.69 L325.88 341.13 Z" fill="#f5a927"/>
<path d="M330.13 342.14 L331.35 345.09 L328.25 346.21 L327.14 343.54 Z" fill="#f5a927"/>
<path d="M331.29 344.92 L332.25 347.96 L329.06 348.80 L328.19 346.05 Z" fill="#f5a927"/>
<path d="M332.20 347.78 L332.89 350.90 L329.64 351.46 L329.02 348.65 Z" fill="#f5a927"/>
<path d="M332.86 350.72 L333.28 353.88 L329.99 354.16 L329.61 351.30 Z" fill="#19c04c"/>
<path d="M333.26 353.70 L333.40 356.89 L330.10 356.88 L329.97 354.00 Z" fill="#19c04c"/>
<path d="M333.40 356.71 L333.26 359.90 L329.97 359.60 L330.10 356.72 Z" fill="#19c04c"/>
<path d="M333.28 359.72 L332.86 362.88 L329.61 362.30 L329.99 359.44 Z" fill="#19c04c"/>
<path d="M332.89 362.70 L332.20 365.82 L329.02 364.95 L329.64 362.14 Z" fill="#19c04c"/>
<path d="M332.25 365.64 L331.29 368.68 L328.19 367.55 L329.06 364.80 Z" fill="#19c04c"/>
<path d="M331.35 368.51 L330.13 371.46 L327.14 370.06 L328.25 367.39 Z" fill="#19c04c"/>
<path d="M330.21 371.30 L328.73 374.13 L325.88 372.47 L327.21 369.91 Z" fill="#19c04c"/>
<path d="M269.02 374.05 L271.88 372.40" stroke="#123" stroke-opacity="0.8" stroke-width="0.6"/>
<path d="M267.63 371.38 L270.62 369.99" stroke="#123" stroke-opacity="0.8" stroke-width="0.6"/>
<path d="M266.48 368.60 L269.58 367.47" stroke="#123" stroke-opacity="0.8" stroke-width="0.6"/>
<path d="M265.58 365.73 L268.76 364.88" stroke="#123" stroke-opacity="0.8" stroke-width="0.6"/>
<path d="M264.92 362.79 L268.17 362.22" stroke="#123" stroke-opacity="0.8" stroke-width="0.6"/>
<path d="M264.53 359.81 L267.82 359.52" stroke="#123" stroke-opacity="0.8" stroke-width="0.6"/>
<path d="M264.40 356.80 L267.70 356.80" stroke="#123" stroke-opacity="0.8" stroke-width="0.6"/>
<path d="M264.53 353.79 L267.82 354.08" stroke="#123" stroke-opacity="0.8" stroke-width="0.6"/>
<path d="M264.92 350.81 L268.17 351.38" stroke="#123" stroke-opacity="0.8" stroke-width="0.6"/>
<path d="M265.58 347.87 L268.76 348.72" stroke="#123" stroke-opacity="0.8" stroke-width="0.6"/>
<path d="M266.48 345.00 L269.58 346.13" stroke="#123" stroke-opacity="0.8" stroke-width="0.6"/>
<path d="M267.63 342.22 L270.62 343.61" stroke="#123" stroke-opacity="0.8" stroke-width="0.6"/>
<path d="M269.02 339.55 L271.88 341.20" stroke="#123" stroke-opacity="0.8" stroke-width="0.6"/>
<path d="M270.64 337.01 L273.34 338.90" stroke="#123" stroke-opacity="0.8" stroke-width="0.6"/>
<path d="M272.47 334.62 L275.00 336.75" stroke="#123" stroke-opacity="0.8" stroke-width="0.6"/>
<path d="M274.50 332.40 L276.84 334.74" stroke="#123" stroke-opacity="0.8" stroke-width="0.6"/>
<path d="M276.72 330.37 L278.85 332.90" stroke="#123" stroke-opacity="0.8" stroke-width="0.6"/>
<path d="M279.11 328.54 L281.00 331.24" stroke="#123" stroke-opacity="0.8" stroke-width="0.6"/>
<path d="M281.65 326.92 L283.30 329.78" stroke="#123" stroke-opacity="0.8" stroke-width="0.6"/>
<path d="M284.32 325.53 L285.71 328.52" stroke="#123" stroke-opacity="0.8" stroke-width="0.6"/>
<path d="M287.10 324.38 L288.23 327.48" stroke="#123" stroke-opacity="0.8" stroke-width="0.6"/>
<path d="M289.97 323.48 L290.82 326.66" stroke="#123" stroke-opacity="0.8" stroke-width="0.6"/>
<path d="M292.91 322.82 L293.48 326.07" stroke="#123" stroke-opacity="0.8" stroke-width="0.6"/>
<path d="M295.89 322.43 L296.18 325.72" stroke="#123" stroke-opacity="0.8" stroke-width="0.6"/>
<path d="M298.90 322.30 L298.90 325.60" stroke="#123" stroke-opacity="0.8" stroke-width="0.6"/>
<path d="M301.91 322.43 L301.62 325.72" stroke="#123" stroke-opacity="0.8" stroke-width="0.6"/>
<path d="M304.89 322.82 L304.32 326.07" stroke="#123" stroke-opacity="0.8" stroke-width="0.6"/>
<path d="M307.83 323.48 L306.98 326.66" stroke="#123" stroke-opacity="0.8" stroke-width="0.6"/>
<path d="M310.70 324.38 L309.57 327.48" stroke="#123" stroke-opacity="0.8" stroke-width="0.6"/>
<path d="M313.48 325.53 L312.09 328.52" stroke="#123" stroke-opacity="0.8" stroke-width="0.6"/>
<path d="M316.15 326.92 L314.50 329.78" stroke="#123" stroke-opacity="0.8" stroke-width="0.6"/>
<path d="M318.69 328.54 L316.80 331.24" stroke="#123" stroke-opacity="0.8" stroke-width="0.6"/>
<path d="M321.08 330.37 L318.95 332.90" stroke="#123" stroke-opacity="0.8" stroke-width="0.6"/>
<path d="M323.30 332.40 L320.96 334.74" stroke="#123" stroke-opacity="0.8" stroke-width="0.6"/>
<path d="M325.33 334.62 L322.80 336.75" stroke="#123" stroke-opacity="0.8" stroke-width="0.6"/>
<path d="M327.16 337.01 L324.46 338.90" stroke="#123" stroke-opacity="0.8" stroke-width="0.6"/>
<path d="M328.78 339.55 L325.92 341.20" stroke="#123" stroke-opacity="0.8" stroke-width="0.6"/>
<path d="M330.17 342.22 L327.18 343.61" stroke="#123" stroke-opacity="0.8" stroke-width="0.6"/>
<path d="M331.32 345.00 L328.22 346.13" stroke="#123" stroke-opacity="0.8" stroke-width="0.6"/>
<path d="M332.22 347.87 L329.04 348.72" stroke="#123" stroke-opacity="0.8" stroke-width="0.6"/>
<path d="M332.88 350.81 L329.63 351.38" stroke="#123" stroke-opacity="0.8" stroke-width="0.6"/>
<path d="M333.27 353.79 L329.98 354.08" stroke="#123" stroke-opacity="0.8" stroke-width="0.6"/>
<path d="M333.40 356.80 L330.10 356.80" stroke="#123" stroke-opacity="0.8" stroke-width="0.6"/>
<path d="M333.27 359.81 L329.98 359.52" stroke="#123" stroke-opacity="0.8" stroke-width="0.6"/>
<path d="M332.88 362.79 L329.63 362.22" stroke="#123" stroke-opacity="0.8" stroke-width="0.6"/>
<path d="M332.22 365.73 L329.04 364.88" stroke="#123" stroke-opacity="0.8" stroke-width="0.6"/>
<path d="M331.32 368.60 L328.22 367.47" stroke="#123" stroke-opacity="0.8" stroke-width="0.6"/>
<path d="M330.17 371.38 L327.18 369.99" stroke="#123" stroke-opacity="0.8" stroke-width="0.6"/>
<path d="M328.78 374.05 L325.92 372.40" stroke="#123" stroke-opacity="0.8" stroke-width="0.6"/>
<path d="M268.42 374.40 L273.96 371.20" stroke="#1c3a2a" stroke-width="0.9"/>
<text x="277.6" y="370.2" class="gl">0</text>
<path d="M268.42 339.20 L273.96 342.40" stroke="#1c3a2a" stroke-width="0.9"/>
<text x="277.6" y="345.6" class="gl">6</text>
<path d="M298.90 321.60 L298.90 328.00" stroke="#1c3a2a" stroke-width="0.9"/>
<text x="298.9" y="333.3" class="gl">12</text>
<path d="M329.38 339.20 L323.84 342.40" stroke="#1c3a2a" stroke-width="0.9"/>
<text x="320.2" y="345.6" class="gl">18</text>
<path d="M329.38 374.40 L323.84 371.20" stroke="#1c3a2a" stroke-width="0.9"/>
<text x="320.2" y="370.2" class="gl">24</text>
<g transform="translate(298.9 356.8) rotate(30.0)"><path d="M0 -1.5 L29.6 -0.2 L29.6 0.2 L0 1.5 A1.5 1.5 0 0 1 0 -1.5 Z" fill="#173c28"/></g>
<text x="298.9" y="369.4" class="gv">24 %</text>
<rect x="274.5" y="378.3" width="48.8" height="10.6" rx="2" fill="#20c25a" stroke="#19a64b" stroke-width="0.6"/>
<text x="298.9" y="385.5" class="nm">НОРМА</text>
<text x="377.7" y="308.2" class="gt">Остаточный ресурс</text>
<text x="377.7" y="314.9" class="gt">двигателя</text>
<clipPath id="gc2"><rect x="337.7" y="316.8" width="80" height="59.80000000000001"/></clipPath>
<circle cx="377.7" cy="356.8" r="33" fill="#cff1da" clip-path="url(#gc2)"/>
<path d="M347.87 374.13 L346.39 371.30 L349.39 369.91 L350.72 372.47 Z" fill="#ea4433"/>
<path d="M346.47 371.46 L345.25 368.51 L348.35 367.39 L349.46 370.06 Z" fill="#ea4433"/>
<path d="M345.31 368.68 L344.35 365.64 L347.54 364.80 L348.41 367.55 Z" fill="#ea4433"/>
<path d="M344.40 365.82 L343.71 362.70 L346.96 362.14 L347.58 364.95 Z" fill="#f5a927"/>
<path d="M343.74 362.88 L343.32 359.72 L346.61 359.44 L346.99 362.30 Z" fill="#f5a927"/>
<path d="M343.34 359.90 L343.20 356.71 L346.50 356.72 L346.63 359.60 Z" fill="#f5a927"/>
<path d="M343.20 356.89 L343.34 353.70 L346.63 354.00 L346.50 356.88 Z" fill="#f5a927"/>
<path d="M343.32 353.88 L343.74 350.72 L346.99 351.30 L346.61 354.16 Z" fill="#f5a927"/>
<path d="M343.71 350.90 L344.40 347.78 L347.58 348.65 L346.96 351.46 Z" fill="#f5a927"/>
<path d="M344.35 347.96 L345.31 344.92 L348.41 346.05 L347.54 348.80 Z" fill="#f5a927"/>
<path d="M345.25 345.09 L346.47 342.14 L349.46 343.54 L348.35 346.21 Z" fill="#f5a927"/>
<path d="M346.39 342.30 L347.87 339.47 L350.72 341.13 L349.39 343.69 Z" fill="#f5a927"/>
<path d="M347.78 339.63 L349.49 336.94 L352.19 338.84 L350.64 341.27 Z" fill="#19c04c"/>
<path d="M349.39 337.09 L351.33 334.55 L353.85 336.68 L352.10 338.97 Z" fill="#19c04c"/>
<path d="M351.21 334.69 L353.37 332.34 L355.70 334.68 L353.75 336.81 Z" fill="#19c04c"/>
<path d="M353.24 332.47 L355.59 330.31 L357.71 332.85 L355.58 334.80 Z" fill="#19c04c"/>
<path d="M355.45 330.43 L357.99 328.49 L359.87 331.20 L357.58 332.95 Z" fill="#19c04c"/>
<path d="M357.84 328.59 L360.53 326.88 L362.17 329.74 L359.74 331.29 Z" fill="#19c04c"/>
<path d="M360.37 326.97 L363.20 325.49 L364.59 328.49 L362.03 329.82 Z" fill="#19c04c"/>
<path d="M363.04 325.57 L365.99 324.35 L367.11 327.45 L364.44 328.56 Z" fill="#19c04c"/>
<path d="M365.82 324.41 L368.86 323.45 L369.70 326.64 L366.95 327.51 Z" fill="#19c04c"/>
<path d="M368.68 323.50 L371.80 322.81 L372.36 326.06 L369.55 326.68 Z" fill="#19c04c"/>
<path d="M371.62 322.84 L374.78 322.42 L375.06 325.71 L372.20 326.09 Z" fill="#19c04c"/>
<path d="M374.60 322.44 L377.79 322.30 L377.78 325.60 L374.90 325.73 Z" fill="#19c04c"/>
<path d="M377.61 322.30 L380.80 322.44 L380.50 325.73 L377.62 325.60 Z" fill="#19c04c"/>
<path d="M380.62 322.42 L383.78 322.84 L383.20 326.09 L380.34 325.71 Z" fill="#19c04c"/>
<path d="M383.60 322.81 L386.72 323.50 L385.85 326.68 L383.04 326.06 Z" fill="#19c04c"/>
<path d="M386.54 323.45 L389.58 324.41 L388.45 327.51 L385.70 326.64 Z" fill="#19c04c"/>
<path d="M389.41 324.35 L392.36 325.57 L390.96 328.56 L388.29 327.45 Z" fill="#19c04c"/>
<path d="M392.20 325.49 L395.03 326.97 L393.37 329.82 L390.81 328.49 Z" fill="#19c04c"/>
<path d="M394.87 326.88 L397.56 328.59 L395.66 331.29 L393.23 329.74 Z" fill="#19c04c"/>
<path d="M397.41 328.49 L399.95 330.43 L397.82 332.95 L395.53 331.20 Z" fill="#19c04c"/>
<path d="M399.81 330.31 L402.16 332.47 L399.82 334.80 L397.69 332.85 Z" fill="#19c04c"/>
<path d="M402.03 332.34 L404.19 334.69 L401.65 336.81 L399.70 334.68 Z" fill="#19c04c"/>
<path d="M404.07 334.55 L406.01 337.09 L403.30 338.97 L401.55 336.68 Z" fill="#19c04c"/>
<path d="M405.91 336.94 L407.62 339.63 L404.76 341.27 L403.21 338.84 Z" fill="#19c04c"/>
<path d="M407.53 339.47 L409.01 342.30 L406.01 343.69 L404.68 341.13 Z" fill="#19c04c"/>
<path d="M408.93 342.14 L410.15 345.09 L407.05 346.21 L405.94 343.54 Z" fill="#19c04c"/>
<path d="M410.09 344.92 L411.05 347.96 L407.86 348.80 L406.99 346.05 Z" fill="#19c04c"/>
<path d="M411.00 347.78 L411.69 350.90 L408.44 351.46 L407.82 348.65 Z" fill="#19c04c"/>
<path d="M411.66 350.72 L412.08 353.88 L408.79 354.16 L408.41 351.30 Z" fill="#19c04c"/>
<path d="M412.06 353.70 L412.20 356.89 L408.90 356.88 L408.77 354.00 Z" fill="#19c04c"/>
<path d="M412.20 356.71 L412.06 359.90 L408.77 359.60 L408.90 356.72 Z" fill="#19c04c"/>
<path d="M412.08 359.72 L411.66 362.88 L408.41 362.30 L408.79 359.44 Z" fill="#19c04c"/>
<path d="M411.69 362.70 L411.00 365.82 L407.82 364.95 L408.44 362.14 Z" fill="#19c04c"/>
<path d="M411.05 365.64 L410.09 368.68 L406.99 367.55 L407.86 364.80 Z" fill="#19c04c"/>
<path d="M410.15 368.51 L408.93 371.46 L405.94 370.06 L407.05 367.39 Z" fill="#19c04c"/>
<path d="M409.01 371.30 L407.53 374.13 L404.68 372.47 L406.01 369.91 Z" fill="#19c04c"/>
<path d="M347.82 374.05 L350.68 372.40" stroke="#123" stroke-opacity="0.8" stroke-width="0.6"/>
<path d="M346.43 371.38 L349.42 369.99" stroke="#123" stroke-opacity="0.8" stroke-width="0.6"/>
<path d="M345.28 368.60 L348.38 367.47" stroke="#123" stroke-opacity="0.8" stroke-width="0.6"/>
<path d="M344.38 365.73 L347.56 364.88" stroke="#123" stroke-opacity="0.8" stroke-width="0.6"/>
<path d="M343.72 362.79 L346.97 362.22" stroke="#123" stroke-opacity="0.8" stroke-width="0.6"/>
<path d="M343.33 359.81 L346.62 359.52" stroke="#123" stroke-opacity="0.8" stroke-width="0.6"/>
<path d="M343.20 356.80 L346.50 356.80" stroke="#123" stroke-opacity="0.8" stroke-width="0.6"/>
<path d="M343.33 353.79 L346.62 354.08" stroke="#123" stroke-opacity="0.8" stroke-width="0.6"/>
<path d="M343.72 350.81 L346.97 351.38" stroke="#123" stroke-opacity="0.8" stroke-width="0.6"/>
<path d="M344.38 347.87 L347.56 348.72" stroke="#123" stroke-opacity="0.8" stroke-width="0.6"/>
<path d="M345.28 345.00 L348.38 346.13" stroke="#123" stroke-opacity="0.8" stroke-width="0.6"/>
<path d="M346.43 342.22 L349.42 343.61" stroke="#123" stroke-opacity="0.8" stroke-width="0.6"/>
<path d="M347.82 339.55 L350.68 341.20" stroke="#123" stroke-opacity="0.8" stroke-width="0.6"/>
<path d="M349.44 337.01 L352.14 338.90" stroke="#123" stroke-opacity="0.8" stroke-width="0.6"/>
<path d="M351.27 334.62 L353.80 336.75" stroke="#123" stroke-opacity="0.8" stroke-width="0.6"/>
<path d="M353.30 332.40 L355.64 334.74" stroke="#123" stroke-opacity="0.8" stroke-width="0.6"/>
<path d="M355.52 330.37 L357.65 332.90" stroke="#123" stroke-opacity="0.8" stroke-width="0.6"/>
<path d="M357.91 328.54 L359.80 331.24" stroke="#123" stroke-opacity="0.8" stroke-width="0.6"/>
<path d="M360.45 326.92 L362.10 329.78" stroke="#123" stroke-opacity="0.8" stroke-width="0.6"/>
<path d="M363.12 325.53 L364.51 328.52" stroke="#123" stroke-opacity="0.8" stroke-width="0.6"/>
<path d="M365.90 324.38 L367.03 327.48" stroke="#123" stroke-opacity="0.8" stroke-width="0.6"/>
<path d="M368.77 323.48 L369.62 326.66" stroke="#123" stroke-opacity="0.8" stroke-width="0.6"/>
<path d="M371.71 322.82 L372.28 326.07" stroke="#123" stroke-opacity="0.8" stroke-width="0.6"/>
<path d="M374.69 322.43 L374.98 325.72" stroke="#123" stroke-opacity="0.8" stroke-width="0.6"/>
<path d="M377.70 322.30 L377.70 325.60" stroke="#123" stroke-opacity="0.8" stroke-width="0.6"/>
<path d="M380.71 322.43 L380.42 325.72" stroke="#123" stroke-opacity="0.8" stroke-width="0.6"/>
<path d="M383.69 322.82 L383.12 326.07" stroke="#123" stroke-opacity="0.8" stroke-width="0.6"/>
<path d="M386.63 323.48 L385.78 326.66" stroke="#123" stroke-opacity="0.8" stroke-width="0.6"/>
<path d="M389.50 324.38 L388.37 327.48" stroke="#123" stroke-opacity="0.8" stroke-width="0.6"/>
<path d="M392.28 325.53 L390.89 328.52" stroke="#123" stroke-opacity="0.8" stroke-width="0.6"/>
<path d="M394.95 326.92 L393.30 329.78" stroke="#123" stroke-opacity="0.8" stroke-width="0.6"/>
<path d="M397.49 328.54 L395.60 331.24" stroke="#123" stroke-opacity="0.8" stroke-width="0.6"/>
<path d="M399.88 330.37 L397.75 332.90" stroke="#123" stroke-opacity="0.8" stroke-width="0.6"/>
<path d="M402.10 332.40 L399.76 334.74" stroke="#123" stroke-opacity="0.8" stroke-width="0.6"/>
<path d="M404.13 334.62 L401.60 336.75" stroke="#123" stroke-opacity="0.8" stroke-width="0.6"/>
<path d="M405.96 337.01 L403.26 338.90" stroke="#123" stroke-opacity="0.8" stroke-width="0.6"/>
<path d="M407.58 339.55 L404.72 341.20" stroke="#123" stroke-opacity="0.8" stroke-width="0.6"/>
<path d="M408.97 342.22 L405.98 343.61" stroke="#123" stroke-opacity="0.8" stroke-width="0.6"/>
<path d="M410.12 345.00 L407.02 346.13" stroke="#123" stroke-opacity="0.8" stroke-width="0.6"/>
<path d="M411.02 347.87 L407.84 348.72" stroke="#123" stroke-opacity="0.8" stroke-width="0.6"/>
<path d="M411.68 350.81 L408.43 351.38" stroke="#123" stroke-opacity="0.8" stroke-width="0.6"/>
<path d="M412.07 353.79 L408.78 354.08" stroke="#123" stroke-opacity="0.8" stroke-width="0.6"/>
<path d="M412.20 356.80 L408.90 356.80" stroke="#123" stroke-opacity="0.8" stroke-width="0.6"/>
<path d="M412.07 359.81 L408.78 359.52" stroke="#123" stroke-opacity="0.8" stroke-width="0.6"/>
<path d="M411.68 362.79 L408.43 362.22" stroke="#123" stroke-opacity="0.8" stroke-width="0.6"/>
<path d="M411.02 365.73 L407.84 364.88" stroke="#123" stroke-opacity="0.8" stroke-width="0.6"/>
<path d="M410.12 368.60 L407.02 367.47" stroke="#123" stroke-opacity="0.8" stroke-width="0.6"/>
<path d="M408.97 371.38 L405.98 369.99" stroke="#123" stroke-opacity="0.8" stroke-width="0.6"/>
<path d="M407.58 374.05 L404.72 372.40" stroke="#123" stroke-opacity="0.8" stroke-width="0.6"/>
<path d="M347.22 374.40 L352.76 371.20" stroke="#1c3a2a" stroke-width="0.9"/>
<text x="356.4" y="370.2" class="gl">0</text>
<path d="M347.22 339.20 L352.76 342.40" stroke="#1c3a2a" stroke-width="0.9"/>
<text x="356.4" y="345.6" class="gl">300</text>
<path d="M377.70 321.60 L377.70 328.00" stroke="#1c3a2a" stroke-width="0.9"/>
<text x="377.7" y="333.3" class="gl">600</text>
<path d="M408.18 339.20 L402.64 342.40" stroke="#1c3a2a" stroke-width="0.9"/>
<text x="399.0" y="345.6" class="gl">900</text>
<path d="M408.18 374.40 L402.64 371.20" stroke="#1c3a2a" stroke-width="0.9"/>
<text x="399.0" y="370.2" class="gl">1200</text>
<g transform="translate(377.7 356.8) rotate(-133.6)"><path d="M0 -1.5 L29.6 -0.2 L29.6 0.2 L0 1.5 A1.5 1.5 0 0 1 0 -1.5 Z" fill="#173c28"/></g>
<text x="377.7" y="369.4" class="gv">382 д</text>
<rect x="353.3" y="378.3" width="48.8" height="10.6" rx="2" fill="#20c25a" stroke="#19a64b" stroke-width="0.6"/>
<text x="377.7" y="385.5" class="nm">НОРМА</text>
<text x="456.5" y="308.2" class="gt">Остаточный ресурс</text>
<text x="456.5" y="314.9" class="gt">подшипника</text>
<clipPath id="gc3"><rect x="416.5" y="316.8" width="80" height="59.80000000000001"/></clipPath>
<circle cx="456.5" cy="356.8" r="33" fill="#cff1da" clip-path="url(#gc3)"/>
<path d="M426.67 374.13 L425.19 371.30 L428.19 369.91 L429.52 372.47 Z" fill="#ea4433"/>
<path d="M425.27 371.46 L424.05 368.51 L427.15 367.39 L428.26 370.06 Z" fill="#ea4433"/>
<path d="M424.11 368.68 L423.15 365.64 L426.34 364.80 L427.21 367.55 Z" fill="#ea4433"/>
<path d="M423.20 365.82 L422.51 362.70 L425.76 362.14 L426.38 364.95 Z" fill="#f5a927"/>
<path d="M422.54 362.88 L422.12 359.72 L425.41 359.44 L425.79 362.30 Z" fill="#f5a927"/>
<path d="M422.14 359.90 L422.00 356.71 L425.30 356.72 L425.43 359.60 Z" fill="#f5a927"/>
<path d="M422.00 356.89 L422.14 353.70 L425.43 354.00 L425.30 356.88 Z" fill="#f5a927"/>
<path d="M422.12 353.88 L422.54 350.72 L425.79 351.30 L425.41 354.16 Z" fill="#f5a927"/>
<path d="M422.51 350.90 L423.20 347.78 L426.38 348.65 L425.76 351.46 Z" fill="#f5a927"/>
<path d="M423.15 347.96 L424.11 344.92 L427.21 346.05 L426.34 348.80 Z" fill="#f5a927"/>
<path d="M424.05 345.09 L425.27 342.14 L428.26 343.54 L427.15 346.21 Z" fill="#f5a927"/>
<path d="M425.19 342.30 L426.67 339.47 L429.52 341.13 L428.19 343.69 Z" fill="#f5a927"/>
<path d="M426.58 339.63 L428.29 336.94 L430.99 338.84 L429.44 341.27 Z" fill="#19c04c"/>
<path d="M428.19 337.09 L430.13 334.55 L432.65 336.68 L430.90 338.97 Z" fill="#19c04c"/>
<path d="M430.01 334.69 L432.17 332.34 L434.50 334.68 L432.55 336.81 Z" fill="#19c04c"/>
<path d="M432.04 332.47 L434.39 330.31 L436.51 332.85 L434.38 334.80 Z" fill="#19c04c"/>
<path d="M434.25 330.43 L436.79 328.49 L438.67 331.20 L436.38 332.95 Z" fill="#19c04c"/>
<path d="M436.64 328.59 L439.33 326.88 L440.97 329.74 L438.54 331.29 Z" fill="#19c04c"/>
<path d="M439.17 326.97 L442.00 325.49 L443.39 328.49 L440.83 329.82 Z" fill="#19c04c"/>
<path d="M441.84 325.57 L444.79 324.35 L445.91 327.45 L443.24 328.56 Z" fill="#19c04c"/>
<path d="M444.62 324.41 L447.66 323.45 L448.50 326.64 L445.75 327.51 Z" fill="#19c04c"/>
<path d="M447.48 323.50 L450.60 322.81 L451.16 326.06 L448.35 326.68 Z" fill="#19c04c"/>
<path d="M450.42 322.84 L453.58 322.42 L453.86 325.71 L451.00 326.09 Z" fill="#19c04c"/>
<path d="M453.40 322.44 L456.59 322.30 L456.58 325.60 L453.70 325.73 Z" fill="#19c04c"/>
<path d="M456.41 322.30 L459.60 322.44 L459.30 325.73 L456.42 325.60 Z" fill="#19c04c"/>
<path d="M459.42 322.42 L462.58 322.84 L462.00 326.09 L459.14 325.71 Z" fill="#19c04c"/>
<path d="M462.40 322.81 L465.52 323.50 L464.65 326.68 L461.84 326.06 Z" fill="#19c04c"/>
<path d="M465.34 323.45 L468.38 324.41 L467.25 327.51 L464.50 326.64 Z" fill="#19c04c"/>
<path d="M468.21 324.35 L471.16 325.57 L469.76 328.56 L467.09 327.45 Z" fill="#19c04c"/>
<path d="M471.00 325.49 L473.83 326.97 L472.17 329.82 L469.61 328.49 Z" fill="#19c04c"/>
<path d="M473.67 326.88 L476.36 328.59 L474.46 331.29 L472.03 329.74 Z" fill="#19c04c"/>
<path d="M476.21 328.49 L478.75 330.43 L476.62 332.95 L474.33 331.20 Z" fill="#19c04c"/>
<path d="M478.61 330.31 L480.96 332.47 L478.62 334.80 L476.49 332.85 Z" fill="#19c04c"/>
<path d="M480.83 332.34 L482.99 334.69 L480.45 336.81 L478.50 334.68 Z" fill="#19c04c"/>
<path d="M482.87 334.55 L484.81 337.09 L482.10 338.97 L480.35 336.68 Z" fill="#19c04c"/>
<path d="M484.71 336.94 L486.42 339.63 L483.56 341.27 L482.01 338.84 Z" fill="#19c04c"/>
<path d="M486.33 339.47 L487.81 342.30 L484.81 343.69 L483.48 341.13 Z" fill="#19c04c"/>
<path d="M487.73 342.14 L488.95 345.09 L485.85 346.21 L484.74 343.54 Z" fill="#19c04c"/>
<path d="M488.89 344.92 L489.85 347.96 L486.66 348.80 L485.79 346.05 Z" fill="#19c04c"/>
<path d="M489.80 347.78 L490.49 350.90 L487.24 351.46 L486.62 348.65 Z" fill="#19c04c"/>
<path d="M490.46 350.72 L490.88 353.88 L487.59 354.16 L487.21 351.30 Z" fill="#19c04c"/>
<path d="M490.86 353.70 L491.00 356.89 L487.70 356.88 L487.57 354.00 Z" fill="#19c04c"/>
<path d="M491.00 356.71 L490.86 359.90 L487.57 359.60 L487.70 356.72 Z" fill="#19c04c"/>
<path d="M490.88 359.72 L490.46 362.88 L487.21 362.30 L487.59 359.44 Z" fill="#19c04c"/>
<path d="M490.49 362.70 L489.80 365.82 L486.62 364.95 L487.24 362.14 Z" fill="#19c04c"/>
<path d="M489.85 365.64 L488.89 368.68 L485.79 367.55 L486.66 364.80 Z" fill="#19c04c"/>
<path d="M488.95 368.51 L487.73 371.46 L484.74 370.06 L485.85 367.39 Z" fill="#19c04c"/>
<path d="M487.81 371.30 L486.33 374.13 L483.48 372.47 L484.81 369.91 Z" fill="#19c04c"/>
<path d="M426.62 374.05 L429.48 372.40" stroke="#123" stroke-opacity="0.8" stroke-width="0.6"/>
<path d="M425.23 371.38 L428.22 369.99" stroke="#123" stroke-opacity="0.8" stroke-width="0.6"/>
<path d="M424.08 368.60 L427.18 367.47" stroke="#123" stroke-opacity="0.8" stroke-width="0.6"/>
<path d="M423.18 365.73 L426.36 364.88" stroke="#123" stroke-opacity="0.8" stroke-width="0.6"/>
<path d="M422.52 362.79 L425.77 362.22" stroke="#123" stroke-opacity="0.8" stroke-width="0.6"/>
<path d="M422.13 359.81 L425.42 359.52" stroke="#123" stroke-opacity="0.8" stroke-width="0.6"/>
<path d="M422.00 356.80 L425.30 356.80" stroke="#123" stroke-opacity="0.8" stroke-width="0.6"/>
<path d="M422.13 353.79 L425.42 354.08" stroke="#123" stroke-opacity="0.8" stroke-width="0.6"/>
<path d="M422.52 350.81 L425.77 351.38" stroke="#123" stroke-opacity="0.8" stroke-width="0.6"/>
<path d="M423.18 347.87 L426.36 348.72" stroke="#123" stroke-opacity="0.8" stroke-width="0.6"/>
<path d="M424.08 345.00 L427.18 346.13" stroke="#123" stroke-opacity="0.8" stroke-width="0.6"/>
<path d="M425.23 342.22 L428.22 343.61" stroke="#123" stroke-opacity="0.8" stroke-width="0.6"/>
<path d="M426.62 339.55 L429.48 341.20" stroke="#123" stroke-opacity="0.8" stroke-width="0.6"/>
<path d="M428.24 337.01 L430.94 338.90" stroke="#123" stroke-opacity="0.8" stroke-width="0.6"/>
<path d="M430.07 334.62 L432.60 336.75" stroke="#123" stroke-opacity="0.8" stroke-width="0.6"/>
<path d="M432.10 332.40 L434.44 334.74" stroke="#123" stroke-opacity="0.8" stroke-width="0.6"/>
<path d="M434.32 330.37 L436.45 332.90" stroke="#123" stroke-opacity="0.8" stroke-width="0.6"/>
<path d="M436.71 328.54 L438.60 331.24" stroke="#123" stroke-opacity="0.8" stroke-width="0.6"/>
<path d="M439.25 326.92 L440.90 329.78" stroke="#123" stroke-opacity="0.8" stroke-width="0.6"/>
<path d="M441.92 325.53 L443.31 328.52" stroke="#123" stroke-opacity="0.8" stroke-width="0.6"/>
<path d="M444.70 324.38 L445.83 327.48" stroke="#123" stroke-opacity="0.8" stroke-width="0.6"/>
<path d="M447.57 323.48 L448.42 326.66" stroke="#123" stroke-opacity="0.8" stroke-width="0.6"/>
<path d="M450.51 322.82 L451.08 326.07" stroke="#123" stroke-opacity="0.8" stroke-width="0.6"/>
<path d="M453.49 322.43 L453.78 325.72" stroke="#123" stroke-opacity="0.8" stroke-width="0.6"/>
<path d="M456.50 322.30 L456.50 325.60" stroke="#123" stroke-opacity="0.8" stroke-width="0.6"/>
<path d="M459.51 322.43 L459.22 325.72" stroke="#123" stroke-opacity="0.8" stroke-width="0.6"/>
<path d="M462.49 322.82 L461.92 326.07" stroke="#123" stroke-opacity="0.8" stroke-width="0.6"/>
<path d="M465.43 323.48 L464.58 326.66" stroke="#123" stroke-opacity="0.8" stroke-width="0.6"/>
<path d="M468.30 324.38 L467.17 327.48" stroke="#123" stroke-opacity="0.8" stroke-width="0.6"/>
<path d="M471.08 325.53 L469.69 328.52" stroke="#123" stroke-opacity="0.8" stroke-width="0.6"/>
<path d="M473.75 326.92 L472.10 329.78" stroke="#123" stroke-opacity="0.8" stroke-width="0.6"/>
<path d="M476.29 328.54 L474.40 331.24" stroke="#123" stroke-opacity="0.8" stroke-width="0.6"/>
<path d="M478.68 330.37 L476.55 332.90" stroke="#123" stroke-opacity="0.8" stroke-width="0.6"/>
<path d="M480.90 332.40 L478.56 334.74" stroke="#123" stroke-opacity="0.8" stroke-width="0.6"/>
<path d="M482.93 334.62 L480.40 336.75" stroke="#123" stroke-opacity="0.8" stroke-width="0.6"/>
<path d="M484.76 337.01 L482.06 338.90" stroke="#123" stroke-opacity="0.8" stroke-width="0.6"/>
<path d="M486.38 339.55 L483.52 341.20" stroke="#123" stroke-opacity="0.8" stroke-width="0.6"/>
<path d="M487.77 342.22 L484.78 343.61" stroke="#123" stroke-opacity="0.8" stroke-width="0.6"/>
<path d="M488.92 345.00 L485.82 346.13" stroke="#123" stroke-opacity="0.8" stroke-width="0.6"/>
<path d="M489.82 347.87 L486.64 348.72" stroke="#123" stroke-opacity="0.8" stroke-width="0.6"/>
<path d="M490.48 350.81 L487.23 351.38" stroke="#123" stroke-opacity="0.8" stroke-width="0.6"/>
<path d="M490.87 353.79 L487.58 354.08" stroke="#123" stroke-opacity="0.8" stroke-width="0.6"/>
<path d="M491.00 356.80 L487.70 356.80" stroke="#123" stroke-opacity="0.8" stroke-width="0.6"/>
<path d="M490.87 359.81 L487.58 359.52" stroke="#123" stroke-opacity="0.8" stroke-width="0.6"/>
<path d="M490.48 362.79 L487.23 362.22" stroke="#123" stroke-opacity="0.8" stroke-width="0.6"/>
<path d="M489.82 365.73 L486.64 364.88" stroke="#123" stroke-opacity="0.8" stroke-width="0.6"/>
<path d="M488.92 368.60 L485.82 367.47" stroke="#123" stroke-opacity="0.8" stroke-width="0.6"/>
<path d="M487.77 371.38 L484.78 369.99" stroke="#123" stroke-opacity="0.8" stroke-width="0.6"/>
<path d="M486.38 374.05 L483.52 372.40" stroke="#123" stroke-opacity="0.8" stroke-width="0.6"/>
<path d="M426.02 374.40 L431.56 371.20" stroke="#1c3a2a" stroke-width="0.9"/>
<text x="435.2" y="370.2" class="gl">0</text>
<path d="M426.02 339.20 L431.56 342.40" stroke="#1c3a2a" stroke-width="0.9"/>
<text x="435.2" y="345.6" class="gl">500</text>
<path d="M456.50 321.60 L456.50 328.00" stroke="#1c3a2a" stroke-width="0.9"/>
<text x="456.5" y="333.3" class="gl">1000</text>
<path d="M486.98 339.20 L481.44 342.40" stroke="#1c3a2a" stroke-width="0.9"/>
<text x="477.8" y="345.6" class="gl">1500</text>
<path d="M486.98 374.40 L481.44 371.20" stroke="#1c3a2a" stroke-width="0.9"/>
<text x="477.8" y="370.2" class="gl">2000</text>
<g transform="translate(456.5 356.8) rotate(-129.5)"><path d="M0 -1.5 L29.6 -0.2 L29.6 0.2 L0 1.5 A1.5 1.5 0 0 1 0 -1.5 Z" fill="#173c28"/></g>
<text x="456.5" y="369.4" class="gv">671 д</text>
<rect x="432.1" y="378.3" width="48.8" height="10.6" rx="2" fill="#20c25a" stroke="#19a64b" stroke-width="0.6"/>
<text x="456.5" y="385.5" class="nm">НОРМА</text>
<text x="535.3" y="308.2" class="gt">Удельный расход</text>
<text x="535.3" y="314.9" class="gt">электроэнергии</text>
<clipPath id="gc4"><rect x="495.29999999999995" y="316.8" width="80" height="59.80000000000001"/></clipPath>
<circle cx="535.3" cy="356.8" r="33" fill="#cff1da" clip-path="url(#gc4)"/>
<path d="M505.47 374.13 L503.99 371.30 L506.99 369.91 L508.32 372.47 Z" fill="#19c04c"/>
<path d="M504.07 371.46 L502.85 368.51 L505.95 367.39 L507.06 370.06 Z" fill="#19c04c"/>
<path d="M502.91 368.68 L501.95 365.64 L505.14 364.80 L506.01 367.55 Z" fill="#19c04c"/>
<path d="M502.00 365.82 L501.31 362.70 L504.56 362.14 L505.18 364.95 Z" fill="#19c04c"/>
<path d="M501.34 362.88 L500.92 359.72 L504.21 359.44 L504.59 362.30 Z" fill="#19c04c"/>
<path d="M500.94 359.90 L500.80 356.71 L504.10 356.72 L504.23 359.60 Z" fill="#19c04c"/>
<path d="M500.80 356.89 L500.94 353.70 L504.23 354.00 L504.10 356.88 Z" fill="#19c04c"/>
<path d="M500.92 353.88 L501.34 350.72 L504.59 351.30 L504.21 354.16 Z" fill="#19c04c"/>
<path d="M501.31 350.90 L502.00 347.78 L505.18 348.65 L504.56 351.46 Z" fill="#19c04c"/>
<path d="M501.95 347.96 L502.91 344.92 L506.01 346.05 L505.14 348.80 Z" fill="#19c04c"/>
<path d="M502.85 345.09 L504.07 342.14 L507.06 343.54 L505.95 346.21 Z" fill="#19c04c"/>
<path d="M503.99 342.30 L505.47 339.47 L508.32 341.13 L506.99 343.69 Z" fill="#19c04c"/>
<path d="M505.38 339.63 L507.09 336.94 L509.79 338.84 L508.24 341.27 Z" fill="#f5a927"/>
<path d="M506.99 337.09 L508.93 334.55 L511.45 336.68 L509.70 338.97 Z" fill="#f5a927"/>
<path d="M508.81 334.69 L510.97 332.34 L513.30 334.68 L511.35 336.81 Z" fill="#f5a927"/>
<path d="M510.84 332.47 L513.19 330.31 L515.31 332.85 L513.18 334.80 Z" fill="#f5a927"/>
<path d="M513.05 330.43 L515.59 328.49 L517.47 331.20 L515.18 332.95 Z" fill="#f5a927"/>
<path d="M515.44 328.59 L518.13 326.88 L519.77 329.74 L517.34 331.29 Z" fill="#f5a927"/>
<path d="M517.97 326.97 L520.80 325.49 L522.19 328.49 L519.63 329.82 Z" fill="#f5a927"/>
<path d="M520.64 325.57 L523.59 324.35 L524.71 327.45 L522.04 328.56 Z" fill="#f5a927"/>
<path d="M523.42 324.41 L526.46 323.45 L527.30 326.64 L524.55 327.51 Z" fill="#f5a927"/>
<path d="M526.28 323.50 L529.40 322.81 L529.96 326.06 L527.15 326.68 Z" fill="#f5a927"/>
<path d="M529.22 322.84 L532.38 322.42 L532.66 325.71 L529.80 326.09 Z" fill="#f5a927"/>
<path d="M532.20 322.44 L535.39 322.30 L535.38 325.60 L532.50 325.73 Z" fill="#f5a927"/>
<path d="M535.21 322.30 L538.40 322.44 L538.10 325.73 L535.22 325.60 Z" fill="#f5a927"/>
<path d="M538.22 322.42 L541.38 322.84 L540.80 326.09 L537.94 325.71 Z" fill="#f5a927"/>
<path d="M541.20 322.81 L544.32 323.50 L543.45 326.68 L540.64 326.06 Z" fill="#f5a927"/>
<path d="M544.14 323.45 L547.18 324.41 L546.05 327.51 L543.30 326.64 Z" fill="#f5a927"/>
<path d="M547.01 324.35 L549.96 325.57 L548.56 328.56 L545.89 327.45 Z" fill="#f5a927"/>
<path d="M549.80 325.49 L552.63 326.97 L550.97 329.82 L548.41 328.49 Z" fill="#f5a927"/>
<path d="M552.47 326.88 L555.16 328.59 L553.26 331.29 L550.83 329.74 Z" fill="#f5a927"/>
<path d="M555.01 328.49 L557.55 330.43 L555.42 332.95 L553.13 331.20 Z" fill="#f5a927"/>
<path d="M557.41 330.31 L559.76 332.47 L557.42 334.80 L555.29 332.85 Z" fill="#f5a927"/>
<path d="M559.63 332.34 L561.79 334.69 L559.25 336.81 L557.30 334.68 Z" fill="#f5a927"/>
<path d="M561.67 334.55 L563.61 337.09 L560.90 338.97 L559.15 336.68 Z" fill="#f5a927"/>
<path d="M563.51 336.94 L565.22 339.63 L562.36 341.27 L560.81 338.84 Z" fill="#f5a927"/>
<path d="M565.13 339.47 L566.61 342.30 L563.61 343.69 L562.28 341.13 Z" fill="#ea4433"/>
<path d="M566.53 342.14 L567.75 345.09 L564.65 346.21 L563.54 343.54 Z" fill="#ea4433"/>
<path d="M567.69 344.92 L568.65 347.96 L565.46 348.80 L564.59 346.05 Z" fill="#ea4433"/>
<path d="M568.60 347.78 L569.29 350.90 L566.04 351.46 L565.42 348.65 Z" fill="#ea4433"/>
<path d="M569.26 350.72 L569.68 353.88 L566.39 354.16 L566.01 351.30 Z" fill="#ea4433"/>
<path d="M569.66 353.70 L569.80 356.89 L566.50 356.88 L566.37 354.00 Z" fill="#ea4433"/>
<path d="M569.80 356.71 L569.66 359.90 L566.37 359.60 L566.50 356.72 Z" fill="#ea4433"/>
<path d="M569.68 359.72 L569.26 362.88 L566.01 362.30 L566.39 359.44 Z" fill="#ea4433"/>
<path d="M569.29 362.70 L568.60 365.82 L565.42 364.95 L566.04 362.14 Z" fill="#ea4433"/>
<path d="M568.65 365.64 L567.69 368.68 L564.59 367.55 L565.46 364.80 Z" fill="#ea4433"/>
<path d="M567.75 368.51 L566.53 371.46 L563.54 370.06 L564.65 367.39 Z" fill="#ea4433"/>
<path d="M566.61 371.30 L565.13 374.13 L562.28 372.47 L563.61 369.91 Z" fill="#ea4433"/>
<path d="M505.42 374.05 L508.28 372.40" stroke="#123" stroke-opacity="0.8" stroke-width="0.6"/>
<path d="M504.03 371.38 L507.02 369.99" stroke="#123" stroke-opacity="0.8" stroke-width="0.6"/>
<path d="M502.88 368.60 L505.98 367.47" stroke="#123" stroke-opacity="0.8" stroke-width="0.6"/>
<path d="M501.98 365.73 L505.16 364.88" stroke="#123" stroke-opacity="0.8" stroke-width="0.6"/>
<path d="M501.32 362.79 L504.57 362.22" stroke="#123" stroke-opacity="0.8" stroke-width="0.6"/>
<path d="M500.93 359.81 L504.22 359.52" stroke="#123" stroke-opacity="0.8" stroke-width="0.6"/>
<path d="M500.80 356.80 L504.10 356.80" stroke="#123" stroke-opacity="0.8" stroke-width="0.6"/>
<path d="M500.93 353.79 L504.22 354.08" stroke="#123" stroke-opacity="0.8" stroke-width="0.6"/>
<path d="M501.32 350.81 L504.57 351.38" stroke="#123" stroke-opacity="0.8" stroke-width="0.6"/>
<path d="M501.98 347.87 L505.16 348.72" stroke="#123" stroke-opacity="0.8" stroke-width="0.6"/>
<path d="M502.88 345.00 L505.98 346.13" stroke="#123" stroke-opacity="0.8" stroke-width="0.6"/>
<path d="M504.03 342.22 L507.02 343.61" stroke="#123" stroke-opacity="0.8" stroke-width="0.6"/>
<path d="M505.42 339.55 L508.28 341.20" stroke="#123" stroke-opacity="0.8" stroke-width="0.6"/>
<path d="M507.04 337.01 L509.74 338.90" stroke="#123" stroke-opacity="0.8" stroke-width="0.6"/>
<path d="M508.87 334.62 L511.40 336.75" stroke="#123" stroke-opacity="0.8" stroke-width="0.6"/>
<path d="M510.90 332.40 L513.24 334.74" stroke="#123" stroke-opacity="0.8" stroke-width="0.6"/>
<path d="M513.12 330.37 L515.25 332.90" stroke="#123" stroke-opacity="0.8" stroke-width="0.6"/>
<path d="M515.51 328.54 L517.40 331.24" stroke="#123" stroke-opacity="0.8" stroke-width="0.6"/>
<path d="M518.05 326.92 L519.70 329.78" stroke="#123" stroke-opacity="0.8" stroke-width="0.6"/>
<path d="M520.72 325.53 L522.11 328.52" stroke="#123" stroke-opacity="0.8" stroke-width="0.6"/>
<path d="M523.50 324.38 L524.63 327.48" stroke="#123" stroke-opacity="0.8" stroke-width="0.6"/>
<path d="M526.37 323.48 L527.22 326.66" stroke="#123" stroke-opacity="0.8" stroke-width="0.6"/>
<path d="M529.31 322.82 L529.88 326.07" stroke="#123" stroke-opacity="0.8" stroke-width="0.6"/>
<path d="M532.29 322.43 L532.58 325.72" stroke="#123" stroke-opacity="0.8" stroke-width="0.6"/>
<path d="M535.30 322.30 L535.30 325.60" stroke="#123" stroke-opacity="0.8" stroke-width="0.6"/>
<path d="M538.31 322.43 L538.02 325.72" stroke="#123" stroke-opacity="0.8" stroke-width="0.6"/>
<path d="M541.29 322.82 L540.72 326.07" stroke="#123" stroke-opacity="0.8" stroke-width="0.6"/>
<path d="M544.23 323.48 L543.38 326.66" stroke="#123" stroke-opacity="0.8" stroke-width="0.6"/>
<path d="M547.10 324.38 L545.97 327.48" stroke="#123" stroke-opacity="0.8" stroke-width="0.6"/>
<path d="M549.88 325.53 L548.49 328.52" stroke="#123" stroke-opacity="0.8" stroke-width="0.6"/>
<path d="M552.55 326.92 L550.90 329.78" stroke="#123" stroke-opacity="0.8" stroke-width="0.6"/>
<path d="M555.09 328.54 L553.20 331.24" stroke="#123" stroke-opacity="0.8" stroke-width="0.6"/>
<path d="M557.48 330.37 L555.35 332.90" stroke="#123" stroke-opacity="0.8" stroke-width="0.6"/>
<path d="M559.70 332.40 L557.36 334.74" stroke="#123" stroke-opacity="0.8" stroke-width="0.6"/>
<path d="M561.73 334.62 L559.20 336.75" stroke="#123" stroke-opacity="0.8" stroke-width="0.6"/>
<path d="M563.56 337.01 L560.86 338.90" stroke="#123" stroke-opacity="0.8" stroke-width="0.6"/>
<path d="M565.18 339.55 L562.32 341.20" stroke="#123" stroke-opacity="0.8" stroke-width="0.6"/>
<path d="M566.57 342.22 L563.58 343.61" stroke="#123" stroke-opacity="0.8" stroke-width="0.6"/>
<path d="M567.72 345.00 L564.62 346.13" stroke="#123" stroke-opacity="0.8" stroke-width="0.6"/>
<path d="M568.62 347.87 L565.44 348.72" stroke="#123" stroke-opacity="0.8" stroke-width="0.6"/>
<path d="M569.28 350.81 L566.03 351.38" stroke="#123" stroke-opacity="0.8" stroke-width="0.6"/>
<path d="M569.67 353.79 L566.38 354.08" stroke="#123" stroke-opacity="0.8" stroke-width="0.6"/>
<path d="M569.80 356.80 L566.50 356.80" stroke="#123" stroke-opacity="0.8" stroke-width="0.6"/>
<path d="M569.67 359.81 L566.38 359.52" stroke="#123" stroke-opacity="0.8" stroke-width="0.6"/>
<path d="M569.28 362.79 L566.03 362.22" stroke="#123" stroke-opacity="0.8" stroke-width="0.6"/>
<path d="M568.62 365.73 L565.44 364.88" stroke="#123" stroke-opacity="0.8" stroke-width="0.6"/>
<path d="M567.72 368.60 L564.62 367.47" stroke="#123" stroke-opacity="0.8" stroke-width="0.6"/>
<path d="M566.57 371.38 L563.58 369.99" stroke="#123" stroke-opacity="0.8" stroke-width="0.6"/>
<path d="M565.18 374.05 L562.32 372.40" stroke="#123" stroke-opacity="0.8" stroke-width="0.6"/>
<path d="M504.82 374.40 L510.36 371.20" stroke="#1c3a2a" stroke-width="0.9"/>
<text x="514.0" y="370.2" class="gl">0</text>
<path d="M504.82 339.20 L510.36 342.40" stroke="#1c3a2a" stroke-width="0.9"/>
<text x="514.0" y="345.6" class="gl">175</text>
<path d="M535.30 321.60 L535.30 328.00" stroke="#1c3a2a" stroke-width="0.9"/>
<text x="535.3" y="333.3" class="gl">350</text>
<path d="M565.78 339.20 L560.24 342.40" stroke="#1c3a2a" stroke-width="0.9"/>
<text x="556.6" y="345.6" class="gl">525</text>
<path d="M565.78 374.40 L560.24 371.20" stroke="#1c3a2a" stroke-width="0.9"/>
<text x="556.6" y="370.2" class="gl">700</text>
<g transform="translate(535.3 356.8) rotate(-209.7)"><path d="M0 -1.5 L29.6 -0.2 L29.6 0.2 L0 1.5 A1.5 1.5 0 0 1 0 -1.5 Z" fill="#173c28"/></g>
<text x="535.3" y="369.4" class="gv">1 кВт.ч/м3</text>
<rect x="510.9" y="378.3" width="48.8" height="10.6" rx="2" fill="#20c25a" stroke="#19a64b" stroke-width="0.6"/>
<text x="535.3" y="385.5" class="nm">НОРМА</text>
<text x="614.1" y="308.2" class="gt">Энергоэффективность</text>
<text x="614.1" y="314.9" class="gt">актива</text>
<clipPath id="gc5"><rect x="574.1" y="316.8" width="80" height="59.80000000000001"/></clipPath>
<circle cx="614.1" cy="356.8" r="33" fill="#cff1da" clip-path="url(#gc5)"/>
<path d="M584.27 374.13 L582.79 371.30 L585.79 369.91 L587.12 372.47 Z" fill="#ea4433"/>
<path d="M582.87 371.46 L581.65 368.51 L584.75 367.39 L585.86 370.06 Z" fill="#ea4433"/>
<path d="M581.71 368.68 L580.75 365.64 L583.94 364.80 L584.81 367.55 Z" fill="#ea4433"/>
<path d="M580.80 365.82 L580.11 362.70 L583.36 362.14 L583.98 364.95 Z" fill="#ea4433"/>
<path d="M580.14 362.88 L579.72 359.72 L583.01 359.44 L583.39 362.30 Z" fill="#ea4433"/>
<path d="M579.74 359.90 L579.60 356.71 L582.90 356.72 L583.03 359.60 Z" fill="#ea4433"/>
<path d="M579.60 356.89 L579.74 353.70 L583.03 354.00 L582.90 356.88 Z" fill="#ea4433"/>
<path d="M579.72 353.88 L580.14 350.72 L583.39 351.30 L583.01 354.16 Z" fill="#ea4433"/>
<path d="M580.11 350.90 L580.80 347.78 L583.98 348.65 L583.36 351.46 Z" fill="#ea4433"/>
<path d="M580.75 347.96 L581.71 344.92 L584.81 346.05 L583.94 348.80 Z" fill="#ea4433"/>
<path d="M581.65 345.09 L582.87 342.14 L585.86 343.54 L584.75 346.21 Z" fill="#ea4433"/>
<path d="M582.79 342.30 L584.27 339.47 L587.12 341.13 L585.79 343.69 Z" fill="#ea4433"/>
<path d="M584.18 339.63 L585.89 336.94 L588.59 338.84 L587.04 341.27 Z" fill="#ea4433"/>
<path d="M585.79 337.09 L587.73 334.55 L590.25 336.68 L588.50 338.97 Z" fill="#ea4433"/>
<path d="M587.61 334.69 L589.77 332.34 L592.10 334.68 L590.15 336.81 Z" fill="#ea4433"/>
<path d="M589.64 332.47 L591.99 330.31 L594.11 332.85 L591.98 334.80 Z" fill="#ea4433"/>
<path d="M591.85 330.43 L594.39 328.49 L596.27 331.20 L593.98 332.95 Z" fill="#ea4433"/>
<path d="M594.24 328.59 L596.93 326.88 L598.57 329.74 L596.14 331.29 Z" fill="#ea4433"/>
<path d="M596.77 326.97 L599.60 325.49 L600.99 328.49 L598.43 329.82 Z" fill="#ea4433"/>
<path d="M599.44 325.57 L602.39 324.35 L603.51 327.45 L600.84 328.56 Z" fill="#ea4433"/>
<path d="M602.22 324.41 L605.26 323.45 L606.10 326.64 L603.35 327.51 Z" fill="#ea4433"/>
<path d="M605.08 323.50 L608.20 322.81 L608.76 326.06 L605.95 326.68 Z" fill="#ea4433"/>
<path d="M608.02 322.84 L611.18 322.42 L611.46 325.71 L608.60 326.09 Z" fill="#ea4433"/>
<path d="M611.00 322.44 L614.19 322.30 L614.18 325.60 L611.30 325.73 Z" fill="#ea4433"/>
<path d="M614.01 322.30 L617.20 322.44 L616.90 325.73 L614.02 325.60 Z" fill="#f5a927"/>
<path d="M617.02 322.42 L620.18 322.84 L619.60 326.09 L616.74 325.71 Z" fill="#f5a927"/>
<path d="M620.00 322.81 L623.12 323.50 L622.25 326.68 L619.44 326.06 Z" fill="#f5a927"/>
<path d="M622.94 323.45 L625.98 324.41 L624.85 327.51 L622.10 326.64 Z" fill="#f5a927"/>
<path d="M625.81 324.35 L628.76 325.57 L627.36 328.56 L624.69 327.45 Z" fill="#f5a927"/>
<path d="M628.60 325.49 L631.43 326.97 L629.77 329.82 L627.21 328.49 Z" fill="#f5a927"/>
<path d="M631.27 326.88 L633.96 328.59 L632.06 331.29 L629.63 329.74 Z" fill="#f5a927"/>
<path d="M633.81 328.49 L636.35 330.43 L634.22 332.95 L631.93 331.20 Z" fill="#f5a927"/>
<path d="M636.21 330.31 L638.56 332.47 L636.22 334.80 L634.09 332.85 Z" fill="#f5a927"/>
<path d="M638.43 332.34 L640.59 334.69 L638.05 336.81 L636.10 334.68 Z" fill="#f5a927"/>
<path d="M640.47 334.55 L642.41 337.09 L639.70 338.97 L637.95 336.68 Z" fill="#f5a927"/>
<path d="M642.31 336.94 L644.02 339.63 L641.16 341.27 L639.61 338.84 Z" fill="#f5a927"/>
<path d="M643.93 339.47 L645.41 342.30 L642.41 343.69 L641.08 341.13 Z" fill="#f5a927"/>
<path d="M645.33 342.14 L646.55 345.09 L643.45 346.21 L642.34 343.54 Z" fill="#f5a927"/>
<path d="M646.49 344.92 L647.45 347.96 L644.26 348.80 L643.39 346.05 Z" fill="#f5a927"/>
<path d="M647.40 347.78 L648.09 350.90 L644.84 351.46 L644.22 348.65 Z" fill="#f5a927"/>
<path d="M648.06 350.72 L648.48 353.88 L645.19 354.16 L644.81 351.30 Z" fill="#f5a927"/>
<path d="M648.46 353.70 L648.60 356.89 L645.30 356.88 L645.17 354.00 Z" fill="#f5a927"/>
<path d="M648.60 356.71 L648.46 359.90 L645.17 359.60 L645.30 356.72 Z" fill="#f5a927"/>
<path d="M648.48 359.72 L648.06 362.88 L644.81 362.30 L645.19 359.44 Z" fill="#19c04c"/>
<path d="M648.09 362.70 L647.40 365.82 L644.22 364.95 L644.84 362.14 Z" fill="#19c04c"/>
<path d="M647.45 365.64 L646.49 368.68 L643.39 367.55 L644.26 364.80 Z" fill="#19c04c"/>
<path d="M646.55 368.51 L645.33 371.46 L642.34 370.06 L643.45 367.39 Z" fill="#19c04c"/>
<path d="M645.41 371.30 L643.93 374.13 L641.08 372.47 L642.41 369.91 Z" fill="#19c04c"/>
<path d="M584.22 374.05 L587.08 372.40" stroke="#123" stroke-opacity="0.8" stroke-width="0.6"/>
<path d="M582.83 371.38 L585.82 369.99" stroke="#123" stroke-opacity="0.8" stroke-width="0.6"/>
<path d="M581.68 368.60 L584.78 367.47" stroke="#123" stroke-opacity="0.8" stroke-width="0.6"/>
<path d="M580.78 365.73 L583.96 364.88" stroke="#123" stroke-opacity="0.8" stroke-width="0.6"/>
<path d="M580.12 362.79 L583.37 362.22" stroke="#123" stroke-opacity="0.8" stroke-width="0.6"/>
<path d="M579.73 359.81 L583.02 359.52" stroke="#123" stroke-opacity="0.8" stroke-width="0.6"/>
<path d="M579.60 356.80 L582.90 356.80" stroke="#123" stroke-opacity="0.8" stroke-width="0.6"/>
<path d="M579.73 353.79 L583.02 354.08" stroke="#123" stroke-opacity="0.8" stroke-width="0.6"/>
<path d="M580.12 350.81 L583.37 351.38" stroke="#123" stroke-opacity="0.8" stroke-width="0.6"/>
<path d="M580.78 347.87 L583.96 348.72" stroke="#123" stroke-opacity="0.8" stroke-width="0.6"/>
<path d="M581.68 345.00 L584.78 346.13" stroke="#123" stroke-opacity="0.8" stroke-width="0.6"/>
<path d="M582.83 342.22 L585.82 343.61" stroke="#123" stroke-opacity="0.8" stroke-width="0.6"/>
<path d="M584.22 339.55 L587.08 341.20" stroke="#123" stroke-opacity="0.8" stroke-width="0.6"/>
<path d="M585.84 337.01 L588.54 338.90" stroke="#123" stroke-opacity="0.8" stroke-width="0.6"/>
<path d="M587.67 334.62 L590.20 336.75" stroke="#123" stroke-opacity="0.8" stroke-width="0.6"/>
<path d="M589.70 332.40 L592.04 334.74" stroke="#123" stroke-opacity="0.8" stroke-width="0.6"/>
<path d="M591.92 330.37 L594.05 332.90" stroke="#123" stroke-opacity="0.8" stroke-width="0.6"/>
<path d="M594.31 328.54 L596.20 331.24" stroke="#123" stroke-opacity="0.8" stroke-width="0.6"/>
<path d="M596.85 326.92 L598.50 329.78" stroke="#123" stroke-opacity="0.8" stroke-width="0.6"/>
<path d="M599.52 325.53 L600.91 328.52" stroke="#123" stroke-opacity="0.8" stroke-width="0.6"/>
<path d="M602.30 324.38 L603.43 327.48" stroke="#123" stroke-opacity="0.8" stroke-width="0.6"/>
<path d="M605.17 323.48 L606.02 326.66" stroke="#123" stroke-opacity="0.8" stroke-width="0.6"/>
<path d="M608.11 322.82 L608.68 326.07" stroke="#123" stroke-opacity="0.8" stroke-width="0.6"/>
<path d="M611.09 322.43 L611.38 325.72" stroke="#123" stroke-opacity="0.8" stroke-width="0.6"/>
<path d="M614.10 322.30 L614.10 325.60" stroke="#123" stroke-opacity="0.8" stroke-width="0.6"/>
<path d="M617.11 322.43 L616.82 325.72" stroke="#123" stroke-opacity="0.8" stroke-width="0.6"/>
<path d="M620.09 322.82 L619.52 326.07" stroke="#123" stroke-opacity="0.8" stroke-width="0.6"/>
<path d="M623.03 323.48 L622.18 326.66" stroke="#123" stroke-opacity="0.8" stroke-width="0.6"/>
<path d="M625.90 324.38 L624.77 327.48" stroke="#123" stroke-opacity="0.8" stroke-width="0.6"/>
<path d="M628.68 325.53 L627.29 328.52" stroke="#123" stroke-opacity="0.8" stroke-width="0.6"/>
<path d="M631.35 326.92 L629.70 329.78" stroke="#123" stroke-opacity="0.8" stroke-width="0.6"/>
<path d="M633.89 328.54 L632.00 331.24" stroke="#123" stroke-opacity="0.8" stroke-width="0.6"/>
<path d="M636.28 330.37 L634.15 332.90" stroke="#123" stroke-opacity="0.8" stroke-width="0.6"/>
<path d="M638.50 332.40 L636.16 334.74" stroke="#123" stroke-opacity="0.8" stroke-width="0.6"/>
<path d="M640.53 334.62 L638.00 336.75" stroke="#123" stroke-opacity="0.8" stroke-width="0.6"/>
<path d="M642.36 337.01 L639.66 338.90" stroke="#123" stroke-opacity="0.8" stroke-width="0.6"/>
<path d="M643.98 339.55 L641.12 341.20" stroke="#123" stroke-opacity="0.8" stroke-width="0.6"/>
<path d="M645.37 342.22 L642.38 343.61" stroke="#123" stroke-opacity="0.8" stroke-width="0.6"/>
<path d="M646.52 345.00 L643.42 346.13" stroke="#123" stroke-opacity="0.8" stroke-width="0.6"/>
<path d="M647.42 347.87 L644.24 348.72" stroke="#123" stroke-opacity="0.8" stroke-width="0.6"/>
<path d="M648.08 350.81 L644.83 351.38" stroke="#123" stroke-opacity="0.8" stroke-width="0.6"/>
<path d="M648.47 353.79 L645.18 354.08" stroke="#123" stroke-opacity="0.8" stroke-width="0.6"/>
<path d="M648.60 356.80 L645.30 356.80" stroke="#123" stroke-opacity="0.8" stroke-width="0.6"/>
<path d="M648.47 359.81 L645.18 359.52" stroke="#123" stroke-opacity="0.8" stroke-width="0.6"/>
<path d="M648.08 362.79 L644.83 362.22" stroke="#123" stroke-opacity="0.8" stroke-width="0.6"/>
<path d="M647.42 365.73 L644.24 364.88" stroke="#123" stroke-opacity="0.8" stroke-width="0.6"/>
<path d="M646.52 368.60 L643.42 367.47" stroke="#123" stroke-opacity="0.8" stroke-width="0.6"/>
<path d="M645.37 371.38 L642.38 369.99" stroke="#123" stroke-opacity="0.8" stroke-width="0.6"/>
<path d="M643.98 374.05 L641.12 372.40" stroke="#123" stroke-opacity="0.8" stroke-width="0.6"/>
<path d="M583.62 374.40 L589.16 371.20" stroke="#1c3a2a" stroke-width="0.9"/>
<text x="592.8" y="370.2" class="gl">0</text>
<path d="M583.62 339.20 L589.16 342.40" stroke="#1c3a2a" stroke-width="0.9"/>
<text x="592.8" y="345.6" class="gl">25</text>
<path d="M614.10 321.60 L614.10 328.00" stroke="#1c3a2a" stroke-width="0.9"/>
<text x="614.1" y="333.3" class="gl">50</text>
<path d="M644.58 339.20 L639.04 342.40" stroke="#1c3a2a" stroke-width="0.9"/>
<text x="635.4" y="345.6" class="gl">75</text>
<path d="M644.58 374.40 L639.04 371.20" stroke="#1c3a2a" stroke-width="0.9"/>
<text x="635.4" y="370.2" class="gl">100</text>
<g transform="translate(614.1 356.8) rotate(30.0)"><path d="M0 -1.5 L29.6 -0.2 L29.6 0.2 L0 1.5 A1.5 1.5 0 0 1 0 -1.5 Z" fill="#173c28"/></g>
<text x="614.1" y="369.4" class="gv">100 %</text>
<rect x="589.7" y="378.3" width="48.8" height="10.6" rx="2" fill="#20c25a" stroke="#19a64b" stroke-width="0.6"/>
<text x="614.1" y="385.5" class="nm">НОРМА</text>
</svg></body></html>
